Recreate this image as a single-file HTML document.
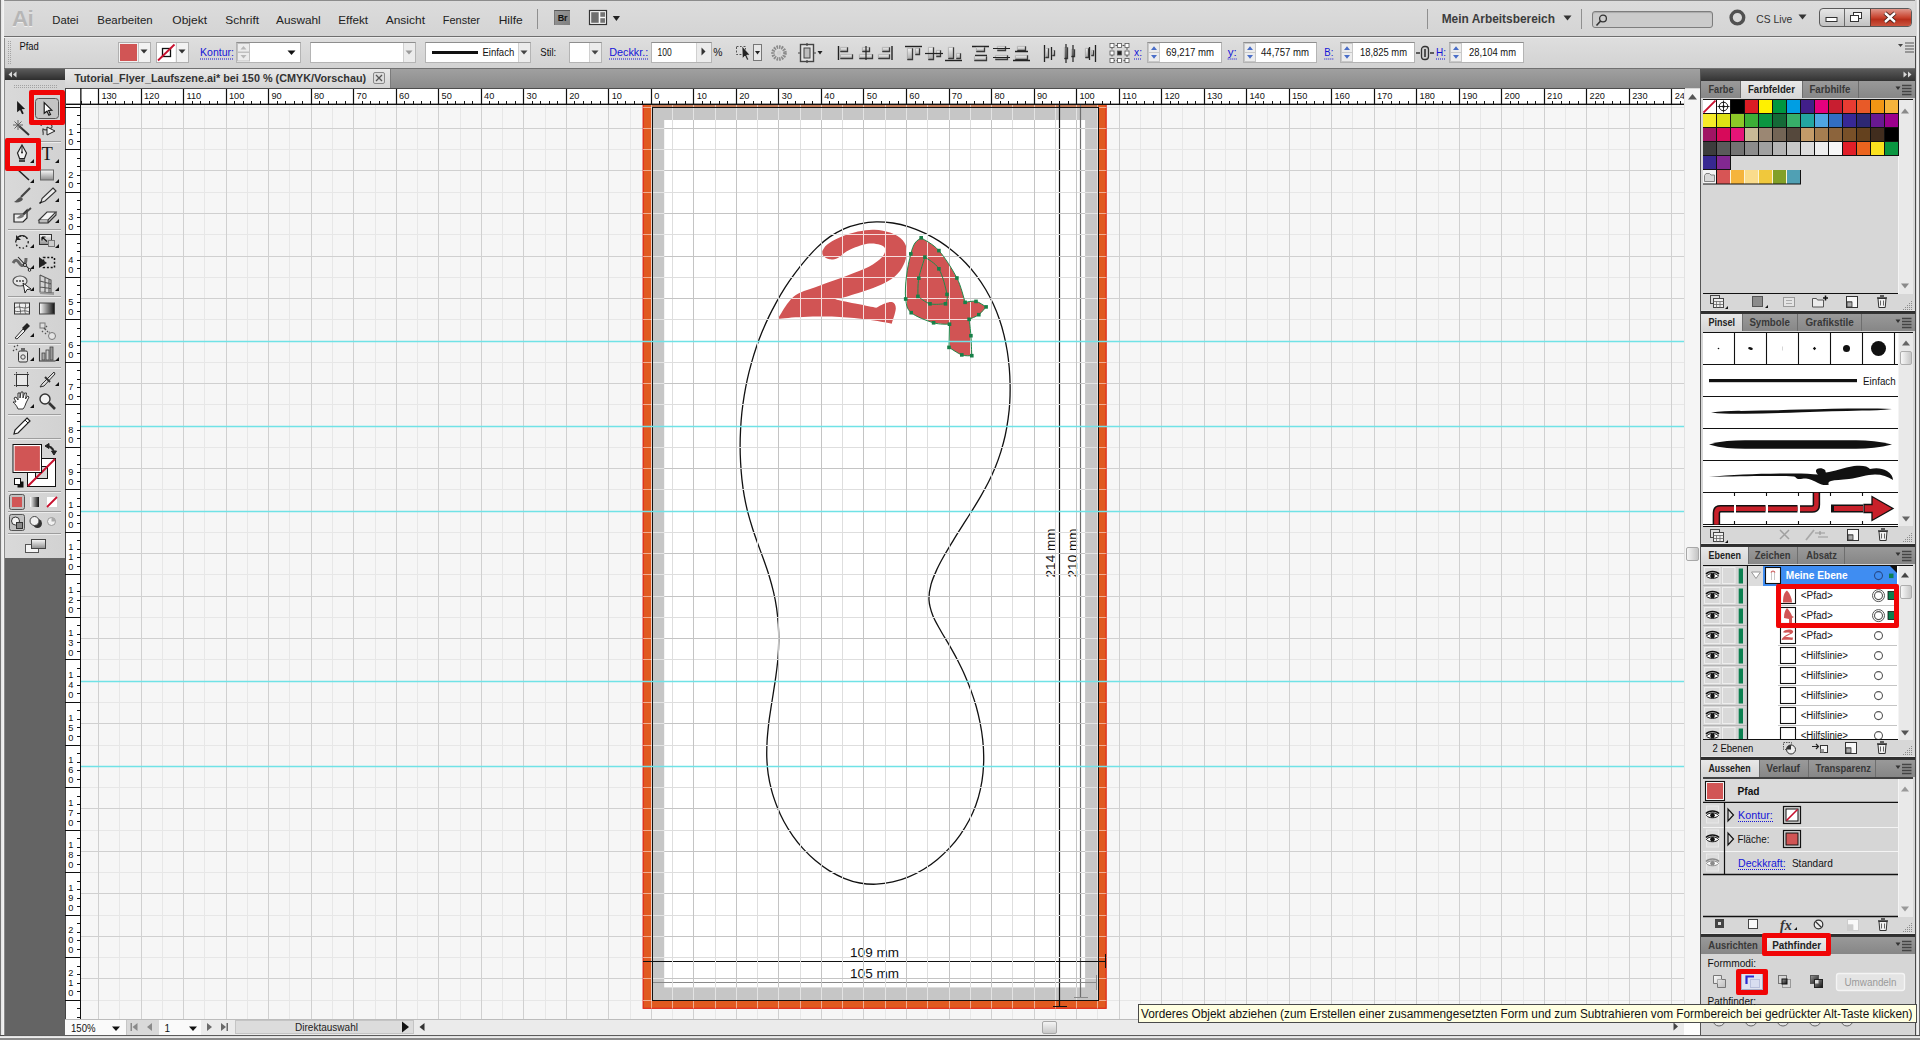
<!DOCTYPE html><html lang="de"><head><meta charset="utf-8"><title>Tutorial_Flyer_Laufszene.ai</title><style>
*{box-sizing:border-box}
html,body{margin:0;padding:0}
body{width:1920px;height:1040px;position:relative;overflow:hidden;background:#d6d6d6;font-family:"Liberation Sans",sans-serif;font-size:11px;color:#111;line-height:1}
.a{position:absolute}
.t{position:absolute;white-space:nowrap}
.menu{font-size:12.5px;color:#1a1a1a;top:13px;letter-spacing:-0.1px}
.lnk{color:#1414d8;border-bottom:1px dotted #1414d8;padding-bottom:1px}
.inp{position:absolute;background:#fff;border:1px solid #b4b4b4;border-top-color:#8e8e8e;height:21px;top:42px}
.tab{position:absolute;height:17px;font-weight:bold;font-size:11px;color:#3a3a3a;padding-top:3px;text-align:center;border-right:1px solid #6e6e6e;background:linear-gradient(#9a9a9a,#878787)}
.tab.on{background:linear-gradient(#e8e8e8,#d6d6d6);color:#222;border-right:none}
.tabbar{position:absolute;left:1701px;width:214px;height:17px;background:linear-gradient(#999,#868686)}
.sep{position:absolute;left:1701px;width:214px;height:4px;background:linear-gradient(#e4e4e4 0,#e4e4e4 1px,#2c2c2c 1px,#333 3.5px,#555 4px)}
.psb{position:absolute;left:1898px;width:15px;background:#e9e9e9;border-left:1px solid #f4f4f4}
.red{position:absolute;border:5px solid #f00506;border-radius:2px}
</style></head><body><svg class="a" style="left:81px;top:105px" width="1603" height="914" viewBox="0 0 1603 914"><defs><path id="gmn" d="M38.5 0V914M81.5 0V914M123.5 0V914M166.5 0V914M208.5 0V914M251.5 0V914M294.5 0V914M336.5 0V914M379.5 0V914M421.5 0V914M464.5 0V914M506.5 0V914M549.5 0V914M591.5 0V914M634.5 0V914M676.5 0V914M719.5 0V914M761.5 0V914M804.5 0V914M846.5 0V914M889.5 0V914M931.5 0V914M974.5 0V914M1016.5 0V914M1059.5 0V914M1101.5 0V914M1144.5 0V914M1186.5 0V914M1229.5 0V914M1271.5 0V914M1314.5 0V914M1357.5 0V914M1399.5 0V914M1442.5 0V914M1484.5 0V914M1527.5 0V914M1569.5 0V914M0 2.5H1603M0 44.5H1603M0 87.5H1603M0 129.5H1603M0 172.5H1603M0 214.5H1603M0 257.5H1603M0 299.5H1603M0 342.5H1603M0 384.5H1603M0 427.5H1603M0 469.5H1603M0 512.5H1603M0 554.5H1603M0 597.5H1603M0 640.5H1603M0 682.5H1603M0 725.5H1603M0 767.5H1603M0 810.5H1603M0 852.5H1603M0 895.5H1603"/><path id="gmj" d="M17.5 0V914M60.5 0V914M102.5 0V914M145.5 0V914M187.5 0V914M230.5 0V914M272.5 0V914M315.5 0V914M357.5 0V914M400.5 0V914M442.5 0V914M485.5 0V914M527.5 0V914M570.5 0V914M612.5 0V914M655.5 0V914M697.5 0V914M740.5 0V914M782.5 0V914M825.5 0V914M868.5 0V914M910.5 0V914M953.5 0V914M995.5 0V914M1038.5 0V914M1080.5 0V914M1123.5 0V914M1165.5 0V914M1208.5 0V914M1250.5 0V914M1293.5 0V914M1335.5 0V914M1378.5 0V914M1420.5 0V914M1463.5 0V914M1505.5 0V914M1548.5 0V914M1590.5 0V914M0 23.5H1603M0 65.5H1603M0 108.5H1603M0 151.5H1603M0 193.5H1603M0 236.5H1603M0 278.5H1603M0 321.5H1603M0 363.5H1603M0 406.5H1603M0 448.5H1603M0 491.5H1603M0 533.5H1603M0 576.5H1603M0 618.5H1603M0 661.5H1603M0 703.5H1603M0 746.5H1603M0 788.5H1603M0 831.5H1603M0 873.5H1603"/><clipPath id="cw"><rect x="583.2" y="15" width="420.9" height="867.4"/></clipPath><clipPath id="cb"><rect x="561.9" y="0" width="463.5" height="903.6"/></clipPath><clipPath id="cr"><path d="M741.3 146.1C742.1 145 743 142 745.9 139.7C748.8 137.4 753.4 134.6 758.6 132.4C763.8 130.2 771.1 127.9 776.9 126.6C782.7 125.3 787.9 124.5 793.4 124.7C798.9 124.9 805.1 126.1 809.8 127.8C814.5 129.6 819 132.1 821.7 135.2C824.4 138.2 825.8 142 825.9 146.1C826 150.2 824.7 155.5 822.6 159.8C820.5 164.1 818.1 168 813.5 171.7C808.9 175.4 802.8 178.6 795.2 181.8C787.6 185 774.6 188.8 767.8 190.9C760.9 193 756.4 193.9 754.1 194.5C757.9 195.3 770 197.7 776.9 199.1C783.8 200.5 792.2 202.2 795.2 202.8C796.7 202 801.6 199.1 804.3 198.2C807 197.3 809.9 196.4 811.6 197.3C813.4 198.2 814.9 200.1 814.8 203.7C814.6 207.3 811.4 216.2 810.7 218.7C806.6 218 794.8 215.7 786.1 214.6C777.4 213.5 769.3 212.3 758.6 211.9C747.9 211.4 732.4 211.6 722.1 211.9C711.8 212.2 701.1 213.4 696.9 213.7C698.7 211 703.9 201.6 707.5 197.3C711.1 193 712.9 191 718.4 188.1C723.9 185.2 732.2 182.9 740.4 179.9C748.6 176.9 759.9 172.9 767.8 169.9C775.7 166.9 782.4 164.6 787.9 161.7C793.4 158.8 798 155.4 800.7 152.5C803.4 149.6 804.6 146.4 804.3 144.3C804 142.2 801.9 140.6 798.9 139.7C795.9 138.8 791.3 137.9 786.1 138.8C780.9 139.7 772.7 142.8 767.8 145.2C762.9 147.5 760 151.4 756.8 152.9C753.6 154.4 751 154.7 748.6 154.3C746.2 153.9 743.4 152.1 742.2 150.7C741 149.3 741.4 146.9 741.3 146.1Z M840.2 132.8C843.2 134.9 852 138.9 857.9 145.6C863.8 152.3 871.5 164.4 875.9 173C880.3 181.6 882.7 193.2 884.1 197.3C885.9 197.2 891.5 195.6 895 196.4C898.5 197.2 903.4 201 905.1 201.9C903.9 203.2 900.6 207.6 897.8 209.7C895 211.8 889.7 213.5 888.1 214.3C888.4 217 889.5 224.6 889.9 230.7C890.3 236.8 890.6 247.4 890.8 250.7C889.1 250.6 884.6 251.3 880.8 249.9C877 248.5 870.1 243.6 868 242.4L868.5 219.2C865.9 219 859 219.7 852.6 217.8C846.2 215.9 834.9 211.7 830.2 207.7C825.6 203.7 825.5 200.1 824.7 194C823.9 187.9 824.6 178.5 825.5 171C826.4 163.5 828.4 154.4 829.8 148.9C831.2 143.4 832.3 140.7 834 138C835.7 135.3 839.2 133.7 840.2 132.8Z M843.9 152.1C846.2 154.1 854.2 157.6 857.9 163.8C861.6 170 864.9 183.6 866 189.4C867.1 195.2 864.8 197.2 864.5 198.8C861.9 198.8 853.6 200 849 198.8C844.4 197.6 838.9 192.6 836.9 191.4C837 188.4 836.6 179.7 837.8 173.2C839 166.7 842.9 155.6 843.9 152.1Z"/></clipPath></defs><rect width="1603" height="914" fill="#f6f6f6"/><g fill="none" stroke-width="1" shape-rendering="crispEdges"><use href="#gmn" stroke="#e7e7e7"/><use href="#gmj" stroke="#d0d0d0"/></g><rect x="561.9" y="-6.3" width="463.5" height="909.9" fill="#e05a20"/><rect x="562.2" y="-6.3" width="462.9" height="909.6" fill="none" stroke="#e02a1c" stroke-width="1.2"/><rect x="570.4" y="0" width="446.5" height="2.2" fill="#c07a58"/><rect x="570.4" y="2.2" width="446.5" height="892.9" fill="#c6c6c6"/><g clip-path="url(#cb)" fill="none" stroke-width="1" shape-rendering="crispEdges" stroke="#fff" stroke-opacity="0.5"><use href="#gmn"/><use href="#gmj"/></g><rect x="583.2" y="15" width="420.9" height="867.4" fill="#fff"/><path d="M741.3 146.1C742.1 145 743 142 745.9 139.7C748.8 137.4 753.4 134.6 758.6 132.4C763.8 130.2 771.1 127.9 776.9 126.6C782.7 125.3 787.9 124.5 793.4 124.7C798.9 124.9 805.1 126.1 809.8 127.8C814.5 129.6 819 132.1 821.7 135.2C824.4 138.2 825.8 142 825.9 146.1C826 150.2 824.7 155.5 822.6 159.8C820.5 164.1 818.1 168 813.5 171.7C808.9 175.4 802.8 178.6 795.2 181.8C787.6 185 774.6 188.8 767.8 190.9C760.9 193 756.4 193.9 754.1 194.5C757.9 195.3 770 197.7 776.9 199.1C783.8 200.5 792.2 202.2 795.2 202.8C796.7 202 801.6 199.1 804.3 198.2C807 197.3 809.9 196.4 811.6 197.3C813.4 198.2 814.9 200.1 814.8 203.7C814.6 207.3 811.4 216.2 810.7 218.7C806.6 218 794.8 215.7 786.1 214.6C777.4 213.5 769.3 212.3 758.6 211.9C747.9 211.4 732.4 211.6 722.1 211.9C711.8 212.2 701.1 213.4 696.9 213.7C698.7 211 703.9 201.6 707.5 197.3C711.1 193 712.9 191 718.4 188.1C723.9 185.2 732.2 182.9 740.4 179.9C748.6 176.9 759.9 172.9 767.8 169.9C775.7 166.9 782.4 164.6 787.9 161.7C793.4 158.8 798 155.4 800.7 152.5C803.4 149.6 804.6 146.4 804.3 144.3C804 142.2 801.9 140.6 798.9 139.7C795.9 138.8 791.3 137.9 786.1 138.8C780.9 139.7 772.7 142.8 767.8 145.2C762.9 147.5 760 151.4 756.8 152.9C753.6 154.4 751 154.7 748.6 154.3C746.2 153.9 743.4 152.1 742.2 150.7C741 149.3 741.4 146.9 741.3 146.1Z" fill="#d15454"/><path d="M840.2 132.8C843.2 134.9 852 138.9 857.9 145.6C863.8 152.3 871.5 164.4 875.9 173C880.3 181.6 882.7 193.2 884.1 197.3C885.9 197.2 891.5 195.6 895 196.4C898.5 197.2 903.4 201 905.1 201.9C903.9 203.2 900.6 207.6 897.8 209.7C895 211.8 889.7 213.5 888.1 214.3C888.4 217 889.5 224.6 889.9 230.7C890.3 236.8 890.6 247.4 890.8 250.7C889.1 250.6 884.6 251.3 880.8 249.9C877 248.5 870.1 243.6 868 242.4L868.5 219.2C865.9 219 859 219.7 852.6 217.8C846.2 215.9 834.9 211.7 830.2 207.7C825.6 203.7 825.5 200.1 824.7 194C823.9 187.9 824.6 178.5 825.5 171C826.4 163.5 828.4 154.4 829.8 148.9C831.2 143.4 832.3 140.7 834 138C835.7 135.3 839.2 133.7 840.2 132.8Z" fill="#d15454"/><path d="M795.2 116.9C800.7 116.8 806.3 117.2 811.8 118C817.3 118.8 822.7 120.1 828 121.8C833.3 123.5 838.6 125.7 843.7 128.1C848.8 130.5 853.8 133.3 858.6 136.4C863.4 139.5 867.9 142.9 872.3 146.5C876.6 150.1 880.8 153.9 884.7 158C888.6 162.1 892.3 166.4 895.6 170.8C898.9 175.2 901.9 179.8 904.7 184.5C907.5 189.2 910 194.1 912.3 199.1C914.6 204.1 916.6 209.1 918.4 214.3C920.2 219.5 921.7 224.8 923 230.2C924.3 235.6 925.4 241 926.3 246.5C927.2 252 927.8 257.6 928.3 263.2C928.8 268.8 929 274.5 929.1 280.1C929.2 285.7 929.1 291.4 928.8 297C928.5 302.6 927.9 308.3 927.1 313.9C926.3 319.5 925.4 325.1 924.2 330.5C923 335.9 921.5 341.3 919.9 346.6C918.2 351.9 916.4 357.2 914.3 362.3C912.2 367.4 909.9 372.4 907.4 377.3C904.9 382.2 902.2 387 899.4 391.8C896.6 396.6 893.7 401.3 890.8 406C887.9 410.7 884.8 415.4 881.8 420.1C878.8 424.8 875.8 429.5 872.9 434.3C870 439.1 867 443.9 864.2 448.8C861.4 453.7 858.6 458.7 856.2 463.8C853.9 468.9 851.5 474 850.1 479.2C848.7 484.4 847.7 489.7 848 495C848.3 500.3 849.9 505.6 851.9 510.8C853.9 516 857.2 521.2 860 526.2C862.8 531.2 865.9 536 868.7 540.9C871.5 545.8 874.1 550.4 876.6 555.3C879.1 560.2 881.6 565.2 883.8 570.2C886 575.2 888.1 580.4 890 585.6C891.9 590.8 893.7 596.1 895.2 601.5C896.7 606.9 898 612.4 899.1 617.9C900.2 623.4 901.1 629 901.7 634.6C902.3 640.2 902.7 645.8 902.7 651.3C902.8 656.8 902.5 662.4 902 667.9C901.5 673.4 900.6 678.9 899.4 684.3C898.2 689.7 896.7 695 894.8 700.2C892.9 705.4 890.6 710.6 888 715.5C885.4 720.4 882.4 725.2 879.2 729.8C876 734.4 872.4 738.8 868.6 742.9C864.8 747 860.7 750.8 856.4 754.4C852.1 758 847.5 761.3 842.7 764.2C837.9 767.1 832.9 769.7 827.7 771.8C822.6 773.9 817.2 775.7 811.8 776.9C806.4 778.1 800.8 779 795.3 779.2C789.8 779.4 784.3 779 778.9 778C773.5 777 768.2 775.4 763.1 773.3C758 771.2 752.9 768.5 748.1 765.6C743.3 762.7 738.7 759.2 734.4 755.6C730.1 752 726.1 748 722.3 743.9C718.5 739.8 715 735.4 711.8 730.8C708.6 726.2 705.5 721.4 702.9 716.5C700.2 711.6 697.9 706.5 695.9 701.3C693.9 696.1 692 690.8 690.6 685.4C689.2 680 688 674.6 687.2 669.1C686.4 663.6 686 658.1 685.8 652.6C685.6 647.1 685.8 641.5 686.1 636C686.4 630.5 687 624.9 687.6 619.4C688.2 613.9 689.2 608.2 690 602.7C690.8 597.2 691.8 591.7 692.6 586.1C693.5 580.5 694.4 575 695.1 569.4C695.8 563.8 696.6 558.3 697 552.8C697.4 547.2 697.7 541.6 697.7 536.1C697.8 530.6 697.6 525 697.3 519.5C696.9 514 696.4 508.6 695.6 503.1C694.8 497.7 693.8 492.2 692.5 486.8C691.2 481.4 689.7 476 688.1 470.7C686.5 465.4 684.6 460.1 682.7 454.8C680.8 449.5 678.8 444.3 676.9 439C675 433.7 673.1 428.4 671.4 423C669.7 417.6 668.1 412.3 666.7 406.9C665.3 401.5 664.2 396.1 663.2 390.6C662.2 385.1 661.5 379.6 660.9 374.1C660.3 368.6 659.9 363.1 659.6 357.5C659.3 351.9 659.1 346.3 659.1 340.7C659.1 335.1 659.3 329.6 659.6 324C659.9 318.4 660.3 312.9 660.9 307.3C661.5 301.8 662.3 296.2 663.2 290.7C664.1 285.2 665.1 279.7 666.3 274.3C667.5 268.9 668.9 263.5 670.4 258.1C671.9 252.8 673.5 247.4 675.3 242.2C677.1 236.9 679.1 231.7 681.2 226.6C683.3 221.5 685.6 216.4 688 211.4C690.4 206.4 693 201.5 695.7 196.6C698.4 191.7 701.3 186.9 704.3 182.2C707.3 177.5 710.5 172.9 713.9 168.4C717.2 163.9 720.7 159.4 724.4 155.1C728.1 150.8 731.8 146.5 735.9 142.6C740 138.7 744.2 135 748.7 131.9C753.2 128.8 758 126 763 123.8C768 121.6 773.4 120 778.8 118.8C784.2 117.7 789.7 117 795.2 116.9Z" fill="none" stroke="#111" stroke-width="1.3"/><path d="M978.5 0V902" stroke="#111" stroke-width="1.2"/><path d="M972 901.5H986" stroke="#111" stroke-width="1"/><path d="M999.5 0V893" stroke="#6e6e6e" stroke-width="1.2"/><path d="M993 892.5H1007" stroke="#8a8a8a" stroke-width="1"/><path d="M562 856.5H1024.5" stroke="#111" stroke-width="1"/><path d="M1024.5 849V863" stroke="#111" stroke-width="1"/><path d="M571 877.5H1016" stroke="#8a8a8a" stroke-width="1"/><path d="M1015.5 870V885" stroke="#8a8a8a" stroke-width="1"/><text x="793.5" y="852" text-anchor="middle" font-family="Liberation Sans, sans-serif" font-size="13.5" fill="#111">109 mm</text><text x="793.5" y="873" text-anchor="middle" font-family="Liberation Sans, sans-serif" font-size="13.5" fill="#111">105 mm</text><text transform="translate(974 448) rotate(-90)" text-anchor="middle" font-family="Liberation Sans, sans-serif" font-size="13.5" fill="#111">214 mm</text><text transform="translate(995.5 448) rotate(-90)" text-anchor="middle" font-family="Liberation Sans, sans-serif" font-size="13.5" fill="#111">210 mm</text><g clip-path="url(#cw)" fill="none" stroke-width="1" shape-rendering="crispEdges"><use href="#gmn" stroke="#dedede"/><use href="#gmj" stroke="#c4c4c4"/></g><g clip-path="url(#cr)" fill="none" stroke-width="1" shape-rendering="crispEdges" stroke="#f6dcdc"><use href="#gmn"/><use href="#gmj"/></g><path d="M840.2 132.8C843.2 134.9 852 138.9 857.9 145.6C863.8 152.3 871.5 164.4 875.9 173C880.3 181.6 882.7 193.2 884.1 197.3C885.9 197.2 891.5 195.6 895 196.4C898.5 197.2 903.4 201 905.1 201.9C903.9 203.2 900.6 207.6 897.8 209.7C895 211.8 889.7 213.5 888.1 214.3C888.4 217 889.5 224.6 889.9 230.7C890.3 236.8 890.6 247.4 890.8 250.7C889.1 250.6 884.6 251.3 880.8 249.9C877 248.5 870.1 243.6 868 242.4L868.5 219.2C865.9 219 859 219.7 852.6 217.8C846.2 215.9 834.9 211.7 830.2 207.7C825.6 203.7 825.5 200.1 824.7 194C823.9 187.9 824.6 178.5 825.5 171C826.4 163.5 828.4 154.4 829.8 148.9C831.2 143.4 832.3 140.7 834 138C835.7 135.3 839.2 133.7 840.2 132.8Z" fill="none" stroke="#1f8a4c" stroke-width="1"/><path d="M843.9 152.1C846.2 154.1 854.2 157.6 857.9 163.8C861.6 170 864.9 183.6 866 189.4C867.1 195.2 864.8 197.2 864.5 198.8C861.9 198.8 853.6 200 849 198.8C844.4 197.6 838.9 192.6 836.9 191.4C837 188.4 836.6 179.7 837.8 173.2C839 166.7 842.9 155.6 843.9 152.1Z" fill="none" stroke="#1f8a4c" stroke-width="1"/><rect x="571.5" y="2.5" width="446" height="893" fill="none" stroke="#111" stroke-width="1.1" shape-rendering="crispEdges"/><path d="M0 236.5H1603M0 321.5H1603M0 406.5H1603M0 576.5H1603M0 661.5H1603" stroke="#70e2e6" stroke-width="1.7" fill="none"/><g fill="#178048"><rect x="838.4" y="131" width="3.6" height="3.6"/><rect x="856.1" y="143.8" width="3.6" height="3.6"/><rect x="874.1" y="171.2" width="3.6" height="3.6"/><rect x="882.3" y="195.5" width="3.6" height="3.6"/><rect x="893.2" y="194.6" width="3.6" height="3.6"/><rect x="903.3" y="200.1" width="3.6" height="3.6"/><rect x="896" y="207.9" width="3.6" height="3.6"/><rect x="886.3" y="212.5" width="3.6" height="3.6"/><rect x="888.1" y="228.9" width="3.6" height="3.6"/><rect x="889" y="248.9" width="3.6" height="3.6"/><rect x="879" y="248.1" width="3.6" height="3.6"/><rect x="866.2" y="240.6" width="3.6" height="3.6"/><rect x="866.7" y="217.4" width="3.6" height="3.6"/><rect x="850.8" y="216" width="3.6" height="3.6"/><rect x="828.4" y="205.9" width="3.6" height="3.6"/><rect x="822.9" y="192.2" width="3.6" height="3.6"/><rect x="828" y="147.1" width="3.6" height="3.6"/><rect x="842.1" y="150.3" width="3.6" height="3.6"/><rect x="856.1" y="162" width="3.6" height="3.6"/><rect x="864.2" y="187.6" width="3.6" height="3.6"/><rect x="862.7" y="197" width="3.6" height="3.6"/><rect x="847.2" y="197" width="3.6" height="3.6"/><rect x="835.1" y="189.6" width="3.6" height="3.6"/><rect x="836" y="171.4" width="3.6" height="3.6"/></g></svg><div class="a" style="left:0;top:0;width:1920px;height:1px;background:#8c8c8c"></div><div class="a" style="left:0;top:0;width:5px;height:1040px;background:linear-gradient(90deg,#777 0,#777 0.8px,#e2e2e2 0.8px,#f4f4f4 3.6px,#9a9a9a 3.6px,#9a9a9a 5px)"></div><div class="a" style="left:1915px;top:0;width:5px;height:1040px;background:linear-gradient(90deg,#d4d4d4 0,#d4d4d4 1px,#cfcfcf 1px,#fafafa 3px,#e0e0e0 4px,#6a6a6a 4px,#6a6a6a 5px)"></div><div class="a" style="left:1915px;top:36px;width:1px;height:1000px;background:#4a4a4a"></div><div class="a" style="left:0;top:1035px;width:1920px;height:5px;background:linear-gradient(#4a4a4a 0,#4a4a4a 1px,#dcdcdc 1px,#f6f6f6 3.5px,#8a8a8a 3.5px,#8a8a8a 5px)"></div><div class="a" style="left:4px;top:1px;width:1911px;height:35px;background:linear-gradient(#dcdcdc,#d4d4d4)"></div><div class="t" style="left:12px;top:8px;font-size:22.5px;font-weight:bold;color:#b6b6b6;letter-spacing:-0.8px;text-shadow:0 1px 0 #eee">Ai</div><div class="a" style="left:537px;top:9px;width:1px;height:20px;background:#8f8f8f"></div><div class="a" style="left:554px;top:10px;width:16px;height:15px;background:linear-gradient(135deg,#9a9a9a,#7e7e7e);border-top:1px solid #555;border-left:1px solid #777;color:#111;font-size:9px;font-weight:bold;text-align:center;padding-top:3px;letter-spacing:-0.3px">Br</div><svg class="a" style="left:588px;top:9px" width="34" height="18"><rect x="1.5" y="1.5" width="17" height="14" fill="#fafafa" stroke="#333" stroke-width="1.2"/><rect x="3.2" y="3.2" width="7.5" height="10.6" fill="#6e6e6e"/><rect x="12.3" y="3.2" width="4.7" height="4.6" fill="#747474"/><rect x="12.3" y="9.2" width="4.7" height="4.6" fill="#747474"/><path d="M24.8 7h7.2l-3.6 5z" fill="#222"/></svg><div class="a" style="left:1427px;top:9px;width:1px;height:20px;background:#8f8f8f"></div><svg class="a" style="left:1563px;top:15px" width="10" height="8"><path d="M0.5 0.5h8l-4 5z" fill="#333"/></svg><div class="a" style="left:1581px;top:9px;width:1px;height:20px;background:#8f8f8f"></div><div class="a" style="left:1592px;top:11px;width:121px;height:17px;background:#cbcbcb;border:1px solid #7d7d7d;border-radius:3px;box-shadow:inset 0 1px 1px #aaa"></div><svg class="a" style="left:1595px;top:13px" width="14" height="14"><circle cx="8" cy="5.5" r="3.4" fill="none" stroke="#333" stroke-width="1.3"/><path d="M5.6 8L1.5 12.5" stroke="#333" stroke-width="1.6"/></svg><svg class="a" style="left:1728px;top:9px" width="18" height="18"><circle cx="9.4" cy="8.6" r="6.3" fill="none" stroke="#505050" stroke-width="3.4"/></svg><svg class="a" style="left:1798px;top:14px" width="10" height="8"><path d="M0.5 0.5h8l-4 5z" fill="#333"/></svg><div class="a" style="left:1819px;top:8px;width:93px;height:19px;border:1px solid #5a5a5a;border-radius:4px;background:linear-gradient(#e6e6e6,#c2c2c2);overflow:hidden"><div class="a" style="left:24px;top:0;width:1px;height:19px;background:#6a6a6a"></div><div class="a" style="left:50px;top:0;width:42px;height:19px;background:linear-gradient(#e0968a,#c8432e 45%,#b8301c 55%,#d0604a);border-left:1px solid #6a3a30"></div></div><svg class="a" style="left:1819px;top:8px" width="93" height="19"><rect x="7" y="9.5" width="11" height="4" fill="#fff" stroke="#333" stroke-width="1"/><rect x="34.5" y="4.5" width="8" height="6" fill="#fff" stroke="#333"/><rect x="31.5" y="7.5" width="8" height="6" fill="#fff" stroke="#333"/><path d="M66 5l10 9M76 5l-10 9" stroke="#3a1a14" stroke-width="4.2"/><path d="M66 5l10 9M76 5l-10 9" stroke="#fff" stroke-width="2.4"/></svg><div class="a" style="left:4px;top:36px;width:1911px;height:1px;background:#6e6e6e"></div><div class="a" style="left:4px;top:37px;width:1911px;height:1px;background:#ededed"></div><div class="a" style="left:4px;top:38px;width:1911px;height:31px;background:linear-gradient(#dedede,#d2d2d2);border-left:1px solid #8c8c8c"></div><svg class="a" style="left:8px;top:41px" width="4" height="23"><path d="M0.5 0v23M2.5 0v23" stroke="#a4a4a4" stroke-width="1" stroke-dasharray="1 1"/></svg><div class="a" style="left:118px;top:42px;width:33px;height:21px;background:#f2f2f2;border:1px solid #b0b0b0"><div class="a" style="left:1px;top:1px;width:17px;height:17px;background:#d15555"></div><div class="a" style="left:19px;top:0;width:1px;height:19px;background:#c4c4c4"></div></div><svg class="a" style="left:140px;top:49px" width="9" height="6"><path d="M0.5 0.5h7l-3.5 4z" fill="#333"/></svg><div class="a" style="left:156px;top:42px;width:33px;height:21px;background:#f2f2f2;border:1px solid #b0b0b0"><div class="a" style="left:19px;top:0;width:1px;height:19px;background:#c4c4c4"></div></div><svg class="a" style="left:157px;top:43px" width="19" height="19"><rect x="0" y="0" width="18" height="19" fill="#fff"/><rect x="5.5" y="5.5" width="8" height="8" fill="none" stroke="#111" stroke-width="1.3"/><path d="M1 17.5L17.5 1.5" stroke="#c8102e" stroke-width="1.8"/></svg><svg class="a" style="left:178px;top:49px" width="9" height="6"><path d="M0.5 0.5h7l-3.5 4z" fill="#333"/></svg><div class="inp" style="left:236px;width:65px"></div><svg class="a" style="left:237px;top:43px" width="14" height="19"><rect x="0.5" y="0.5" width="12" height="8.5" fill="#ececec" stroke="#c0c0c0"/><rect x="0.5" y="9.5" width="12" height="8.5" fill="#ececec" stroke="#c0c0c0"/><path d="M3.5 6.5h6l-3-3.5zM3.5 12h6l-3 3.5z" fill="#b8b8b8"/></svg><svg class="a" style="left:287px;top:50px" width="10" height="6"><path d="M0.5 0.5h8l-4 4.5z" fill="#111"/></svg><div class="inp" style="left:310px;width:106px"><div class="a" style="right:0;top:0;width:12px;height:19px;background:#ececec;border-left:1px solid #d0d0d0"></div></div><svg class="a" style="left:405px;top:50px" width="9" height="6"><path d="M0.5 0.5h7l-3.5 4z" fill="#9a9a9a"/></svg><div class="inp" style="left:425px;width:106px"><div class="a" style="left:6px;top:8px;width:46px;height:3px;background:#111"></div><div class="a" style="right:0;top:0;width:12px;height:19px;background:#ececec;border-left:1px solid #d0d0d0"></div></div><svg class="a" style="left:520px;top:50px" width="9" height="6"><path d="M0.5 0.5h7l-3.5 4z" fill="#444"/></svg><div class="inp" style="left:569px;width:33px"><div class="a" style="right:0;top:0;width:12px;height:19px;background:#ececec;border-left:1px solid #d0d0d0"></div></div><svg class="a" style="left:591px;top:50px" width="9" height="6"><path d="M0.5 0.5h7l-3.5 4z" fill="#444"/></svg><div class="inp" style="left:651px;width:61px"><div class="a" style="right:0;top:0;width:15px;height:19px;background:#ececec;border-left:1px solid #d0d0d0"></div></div><svg class="a" style="left:700px;top:47px" width="8" height="10"><path d="M1.5 0.5v8l4-4z" fill="#333"/></svg><svg class="a" style="left:65px;top:88px" width="1620" height="17" viewBox="0 0 1620 17"><rect width="1620" height="17" fill="#fff"/><rect y="0" width="1620" height="1" fill="#4c4c4c"/><rect y="15.6" width="1620" height="1.4" fill="#111"/><rect x="15.2" y="0" width="1.3" height="17" fill="#111"/><rect x="0" y="0" width="1" height="17" fill="#444"/><path d="M33.5 1V16M76.5 1V16M118.5 1V16M161.5 1V16M203.5 1V16M246.5 1V16M288.5 1V16M331.5 1V16M373.5 1V16M416.5 1V16M458.5 1V16M501.5 1V16M543.5 1V16M586.5 1V16M628.5 1V16M671.5 1V16M713.5 1V16M756.5 1V16M798.5 1V16M841.5 1V16M884.5 1V16M926.5 1V16M969.5 1V16M1011.5 1V16M1054.5 1V16M1096.5 1V16M1139.5 1V16M1181.5 1V16M1224.5 1V16M1266.5 1V16M1309.5 1V16M1351.5 1V16M1394.5 1V16M1436.5 1V16M1479.5 1V16M1521.5 1V16M1564.5 1V16M1606.5 1V16" stroke="#111" stroke-width="1.2" fill="none"/><path d="M16.5 13V16M25.5 13V16M42.5 13V16M50.5 13V16M59.5 13V16M67.5 13V16M84.5 13V16M93.5 13V16M101.5 13V16M110.5 13V16M127.5 13V16M135.5 13V16M144.5 13V16M152.5 13V16M169.5 13V16M178.5 13V16M186.5 13V16M195.5 13V16M212.5 13V16M220.5 13V16M229.5 13V16M237.5 13V16M254.5 13V16M263.5 13V16M271.5 13V16M280.5 13V16M297.5 13V16M305.5 13V16M314.5 13V16M322.5 13V16M339.5 13V16M348.5 13V16M356.5 13V16M365.5 13V16M382.5 13V16M390.5 13V16M399.5 13V16M407.5 13V16M424.5 13V16M433.5 13V16M441.5 13V16M450.5 13V16M467.5 13V16M475.5 13V16M484.5 13V16M492.5 13V16M509.5 13V16M518.5 13V16M526.5 13V16M535.5 13V16M552.5 13V16M560.5 13V16M569.5 13V16M577.5 13V16M594.5 13V16M603.5 13V16M611.5 13V16M620.5 13V16M637.5 13V16M645.5 13V16M654.5 13V16M662.5 13V16M679.5 13V16M688.5 13V16M696.5 13V16M705.5 13V16M722.5 13V16M730.5 13V16M739.5 13V16M747.5 13V16M764.5 13V16M773.5 13V16M781.5 13V16M790.5 13V16M807.5 13V16M816.5 13V16M824.5 13V16M833.5 13V16M850.5 13V16M858.5 13V16M867.5 13V16M875.5 13V16M892.5 13V16M901.5 13V16M909.5 13V16M918.5 13V16M935.5 13V16M943.5 13V16M952.5 13V16M960.5 13V16M977.5 13V16M986.5 13V16M994.5 13V16M1003.5 13V16M1020.5 13V16M1028.5 13V16M1037.5 13V16M1045.5 13V16M1062.5 13V16M1071.5 13V16M1079.5 13V16M1088.5 13V16M1105.5 13V16M1113.5 13V16M1122.5 13V16M1130.5 13V16M1147.5 13V16M1156.5 13V16M1164.5 13V16M1173.5 13V16M1190.5 13V16M1198.5 13V16M1207.5 13V16M1215.5 13V16M1232.5 13V16M1241.5 13V16M1249.5 13V16M1258.5 13V16M1275.5 13V16M1283.5 13V16M1292.5 13V16M1300.5 13V16M1317.5 13V16M1326.5 13V16M1334.5 13V16M1343.5 13V16M1360.5 13V16M1368.5 13V16M1377.5 13V16M1385.5 13V16M1402.5 13V16M1411.5 13V16M1419.5 13V16M1428.5 13V16M1445.5 13V16M1453.5 13V16M1462.5 13V16M1470.5 13V16M1487.5 13V16M1496.5 13V16M1504.5 13V16M1513.5 13V16M1530.5 13V16M1538.5 13V16M1547.5 13V16M1555.5 13V16M1572.5 13V16M1581.5 13V16M1589.5 13V16M1598.5 13V16M1615.5 13V16" stroke="#111" stroke-width="1" fill="none"/><g font-family="Liberation Sans, sans-serif" font-size="9.2" fill="#111"><text x="36.4" y="10.8">130</text><text x="79" y="10.8">120</text><text x="121.5" y="10.8">110</text><text x="164" y="10.8">100</text><text x="206.5" y="10.8">90</text><text x="249" y="10.8">80</text><text x="291.6" y="10.8">70</text><text x="334.1" y="10.8">60</text><text x="376.6" y="10.8">50</text><text x="419.1" y="10.8">40</text><text x="461.6" y="10.8">30</text><text x="504.2" y="10.8">20</text><text x="546.7" y="10.8">10</text><text x="589.2" y="10.8">0</text><text x="631.7" y="10.8">10</text><text x="674.2" y="10.8">20</text><text x="716.8" y="10.8">30</text><text x="759.3" y="10.8">40</text><text x="801.8" y="10.8">50</text><text x="844.3" y="10.8">60</text><text x="886.8" y="10.8">70</text><text x="929.4" y="10.8">80</text><text x="971.9" y="10.8">90</text><text x="1014.4" y="10.8">100</text><text x="1056.9" y="10.8">110</text><text x="1099.4" y="10.8">120</text><text x="1142" y="10.8">130</text><text x="1184.5" y="10.8">140</text><text x="1227" y="10.8">150</text><text x="1269.5" y="10.8">160</text><text x="1312" y="10.8">170</text><text x="1354.6" y="10.8">180</text><text x="1397.1" y="10.8">190</text><text x="1439.6" y="10.8">200</text><text x="1482.1" y="10.8">210</text><text x="1524.6" y="10.8">220</text><text x="1567.2" y="10.8">230</text><text x="1609.7" y="10.8">240</text></g></svg><svg class="a" style="left:65px;top:105px" width="16" height="914" viewBox="0 0 16 914"><rect width="16" height="914" fill="#fff"/><rect x="15" width="1.3" height="914" fill="#111"/><rect x="0" width="1" height="914" fill="#444"/><path d="M0 2.5H16M0 44.5H16M0 87.5H16M0 129.5H16M0 172.5H16M0 214.5H16M0 257.5H16M0 299.5H16M0 342.5H16M0 384.5H16M0 427.5H16M0 469.5H16M0 512.5H16M0 554.5H16M0 597.5H16M0 640.5H16M0 682.5H16M0 725.5H16M0 767.5H16M0 810.5H16M0 852.5H16M0 895.5H16" stroke="#111" stroke-width="1.2" fill="none"/><path d="M12 10.5H16M12 19.5H16M12 27.5H16M12 36.5H16M12 53.5H16M12 61.5H16M12 70.5H16M12 78.5H16M12 95.5H16M12 104.5H16M12 112.5H16M12 121.5H16M12 138.5H16M12 146.5H16M12 155.5H16M12 163.5H16M12 180.5H16M12 189.5H16M12 197.5H16M12 206.5H16M12 223.5H16M12 231.5H16M12 240.5H16M12 248.5H16M12 265.5H16M12 274.5H16M12 282.5H16M12 291.5H16M12 308.5H16M12 316.5H16M12 325.5H16M12 333.5H16M12 350.5H16M12 359.5H16M12 367.5H16M12 376.5H16M12 393.5H16M12 401.5H16M12 410.5H16M12 418.5H16M12 435.5H16M12 444.5H16M12 452.5H16M12 461.5H16M12 478.5H16M12 486.5H16M12 495.5H16M12 503.5H16M12 520.5H16M12 529.5H16M12 537.5H16M12 546.5H16M12 563.5H16M12 571.5H16M12 580.5H16M12 588.5H16M12 605.5H16M12 614.5H16M12 622.5H16M12 631.5H16M12 648.5H16M12 657.5H16M12 665.5H16M12 674.5H16M12 691.5H16M12 699.5H16M12 708.5H16M12 716.5H16M12 733.5H16M12 742.5H16M12 750.5H16M12 759.5H16M12 776.5H16M12 784.5H16M12 793.5H16M12 801.5H16M12 818.5H16M12 827.5H16M12 835.5H16M12 844.5H16M12 861.5H16M12 869.5H16M12 878.5H16M12 886.5H16M12 903.5H16M12 912.5H16" stroke="#111" stroke-width="1" fill="none"/><g font-family="Liberation Sans, sans-serif" font-size="9.2" fill="#111"><text x="3.2" y="30.2">1</text><text x="3.2" y="40.2">0</text><text x="3.2" y="72.7">2</text><text x="3.2" y="82.7">0</text><text x="3.2" y="115.3">3</text><text x="3.2" y="125.3">0</text><text x="3.2" y="157.8">4</text><text x="3.2" y="167.8">0</text><text x="3.2" y="200.3">5</text><text x="3.2" y="210.3">0</text><text x="3.2" y="242.8">6</text><text x="3.2" y="252.8">0</text><text x="3.2" y="285.3">7</text><text x="3.2" y="295.3">0</text><text x="3.2" y="327.9">8</text><text x="3.2" y="337.9">0</text><text x="3.2" y="370.4">9</text><text x="3.2" y="380.4">0</text><text x="3.2" y="402.9">1</text><text x="3.2" y="412.9">0</text><text x="3.2" y="422.9">0</text><text x="3.2" y="445.4">1</text><text x="3.2" y="455.4">1</text><text x="3.2" y="465.4">0</text><text x="3.2" y="487.9">1</text><text x="3.2" y="497.9">2</text><text x="3.2" y="507.9">0</text><text x="3.2" y="530.5">1</text><text x="3.2" y="540.5">3</text><text x="3.2" y="550.5">0</text><text x="3.2" y="573">1</text><text x="3.2" y="583">4</text><text x="3.2" y="593">0</text><text x="3.2" y="615.5">1</text><text x="3.2" y="625.5">5</text><text x="3.2" y="635.5">0</text><text x="3.2" y="658">1</text><text x="3.2" y="668">6</text><text x="3.2" y="678">0</text><text x="3.2" y="700.5">1</text><text x="3.2" y="710.5">7</text><text x="3.2" y="720.5">0</text><text x="3.2" y="743.1">1</text><text x="3.2" y="753.1">8</text><text x="3.2" y="763.1">0</text><text x="3.2" y="785.6">1</text><text x="3.2" y="795.6">9</text><text x="3.2" y="805.6">0</text><text x="3.2" y="828.1">2</text><text x="3.2" y="838.1">0</text><text x="3.2" y="848.1">0</text><text x="3.2" y="870.6">2</text><text x="3.2" y="880.6">1</text><text x="3.2" y="890.6">0</text></g></svg><svg class="a" style="left:730px;top:38px" width="410" height="30" viewBox="730 38 410 30"><defs><linearGradient id="gb" x1="0" y1="0" x2="0" y2="1"><stop offset="0" stop-color="#f6f6f6"/><stop offset="1" stop-color="#a2a2a2"/></linearGradient></defs><rect x="736.5" y="46.5" width="9" height="8" fill="none" stroke="#555" stroke-dasharray="2 1.5"/><path d="M742 46l8 9-3.3.2 2 4.3-1.7.8-2-4.3-2.6 2.4z" fill="#222" stroke="#f0f0f0" stroke-width=".6"/><rect x="753.5" y="44.5" width="8" height="16" fill="#e8e8e8" stroke="#777"/><path d="M755 51h5l-2.5 3.5z" fill="#222"/><circle cx="779" cy="53" r="6" fill="none" stroke="#8a8a8a" stroke-width="3.5" stroke-dasharray="1.6 0.9"/><circle cx="779" cy="53" r="2.2" fill="#cfcfcf"/><rect x="800.5" y="44.5" width="13" height="17" fill="#e4e4e4" stroke="#444" stroke-width="1.4"/><rect x="804" y="48" width="6" height="10" fill="#bdbdbd" stroke="#444"/><path d="M807 43v3M807 60v3M798 53h3M813 53h3" stroke="#444" stroke-width="1.2"/><path d="M817.5 51h5l-2.5 3.5z" fill="#222"/><path d="M838.5 46v14" stroke="#222" stroke-width="1.4"/><rect x="840" y="47" width="8" height="5" fill="url(#gb)"/><path d="M840.3 51.5H847.5V47.3" fill="none" stroke="#3a3a3a" stroke-width="1.3"/><path d="M840.4 51V47.4H847" fill="none" stroke="#a8a8a8" stroke-width=".800"/><rect x="840" y="54" width="13" height="5" fill="url(#gb)"/><path d="M840.3 58.5H852.5V54.3" fill="none" stroke="#3a3a3a" stroke-width="1.3"/><path d="M840.4 58V54.4H852" fill="none" stroke="#a8a8a8" stroke-width=".800"/><rect x="862" y="47" width="8" height="5" fill="url(#gb)"/><path d="M862.3 51.5H869.5V47.3" fill="none" stroke="#3a3a3a" stroke-width="1.3"/><path d="M862.4 51V47.4H869" fill="none" stroke="#a8a8a8" stroke-width=".800"/><rect x="859" y="54" width="14" height="5" fill="url(#gb)"/><path d="M859.3 58.5H872.5V54.3" fill="none" stroke="#3a3a3a" stroke-width="1.3"/><path d="M859.4 58V54.4H872" fill="none" stroke="#a8a8a8" stroke-width=".800"/><path d="M866 46v14" stroke="#222" stroke-width="1.2"/><path d="M892 46v14" stroke="#222" stroke-width="1.4"/><rect x="882" y="47" width="8" height="5" fill="url(#gb)"/><path d="M882.3 51.5H889.5V47.3" fill="none" stroke="#3a3a3a" stroke-width="1.3"/><path d="M882.4 51V47.4H889" fill="none" stroke="#a8a8a8" stroke-width=".800"/><rect x="878" y="54" width="12" height="5" fill="url(#gb)"/><path d="M878.3 58.5H889.5V54.3" fill="none" stroke="#3a3a3a" stroke-width="1.3"/><path d="M878.4 58V54.4H889" fill="none" stroke="#a8a8a8" stroke-width=".800"/><path d="M905 46.5h17" stroke="#222" stroke-width="1.4"/><rect x="907" y="48" width="6" height="12" fill="url(#gb)"/><path d="M907.3 59.5H912.5V48.3" fill="none" stroke="#3a3a3a" stroke-width="1.3"/><path d="M907.4 59V48.4H912" fill="none" stroke="#a8a8a8" stroke-width=".800"/><rect x="915" y="48" width="5" height="7" fill="url(#gb)"/><path d="M915.3 54.5H919.5V48.3" fill="none" stroke="#3a3a3a" stroke-width="1.3"/><path d="M915.4 54V48.4H919" fill="none" stroke="#a8a8a8" stroke-width=".800"/><rect x="928" y="47" width="6" height="13" fill="url(#gb)"/><path d="M928.3 59.5H933.5V47.3" fill="none" stroke="#3a3a3a" stroke-width="1.3"/><path d="M928.4 59V47.4H933" fill="none" stroke="#a8a8a8" stroke-width=".800"/><rect x="936" y="50" width="5" height="7" fill="url(#gb)"/><path d="M936.3 56.5H940.5V50.3" fill="none" stroke="#3a3a3a" stroke-width="1.3"/><path d="M936.4 56V50.4H940" fill="none" stroke="#a8a8a8" stroke-width=".800"/><path d="M925 53.5h18" stroke="#222" stroke-width="1.2"/><path d="M945 60.5h17" stroke="#222" stroke-width="1.4"/><rect x="948" y="47" width="6" height="12" fill="url(#gb)"/><path d="M948.3 58.5H953.5V47.3" fill="none" stroke="#3a3a3a" stroke-width="1.3"/><path d="M948.4 58V47.4H953" fill="none" stroke="#a8a8a8" stroke-width=".800"/><rect x="956" y="53" width="5" height="6" fill="url(#gb)"/><path d="M956.3 58.5H960.5V53.3" fill="none" stroke="#3a3a3a" stroke-width="1.3"/><path d="M956.4 58V53.4H960" fill="none" stroke="#a8a8a8" stroke-width=".800"/><path d="M972 46.5h17M975 55.5h12" stroke="#222" stroke-width="1.3"/><rect x="976" y="47" width="9" height="5" fill="url(#gb)"/><path d="M976.3 51.5H984.5V47.3" fill="none" stroke="#3a3a3a" stroke-width="1.3"/><path d="M976.4 51V47.4H984" fill="none" stroke="#a8a8a8" stroke-width=".800"/><rect x="974" y="56" width="13" height="5" fill="url(#gb)"/><path d="M974.3 60.5H986.5V56.3" fill="none" stroke="#3a3a3a" stroke-width="1.3"/><path d="M974.4 60V56.4H986" fill="none" stroke="#a8a8a8" stroke-width=".800"/><rect x="997" y="46" width="9" height="5" fill="url(#gb)"/><path d="M997.3 50.5H1005.5V46.3" fill="none" stroke="#3a3a3a" stroke-width="1.3"/><path d="M997.4 50V46.4H1005" fill="none" stroke="#a8a8a8" stroke-width=".800"/><rect x="995" y="55" width="13" height="5" fill="url(#gb)"/><path d="M995.3 59.5H1007.5V55.3" fill="none" stroke="#3a3a3a" stroke-width="1.3"/><path d="M995.4 59V55.4H1007" fill="none" stroke="#a8a8a8" stroke-width=".800"/><path d="M993 48.5h17M993 57.5h17" stroke="#222" stroke-width="1.2"/><rect x="1017" y="46" width="9" height="5" fill="url(#gb)"/><path d="M1017.3 50.5H1025.5V46.3" fill="none" stroke="#3a3a3a" stroke-width="1.3"/><path d="M1017.4 50V46.4H1025" fill="none" stroke="#a8a8a8" stroke-width=".800"/><rect x="1015" y="55" width="13" height="5" fill="url(#gb)"/><path d="M1015.3 59.5H1027.5V55.3" fill="none" stroke="#3a3a3a" stroke-width="1.3"/><path d="M1015.4 59V55.4H1027" fill="none" stroke="#a8a8a8" stroke-width=".800"/><path d="M1015 51.5h13M1013 60.5h17" stroke="#222" stroke-width="1.3"/><path d="M1044.5 45v17M1051.5 47v13" stroke="#222" stroke-width="1.3"/><rect x="1045" y="48" width="4" height="10" fill="url(#gb)"/><path d="M1045.3 57.5H1048.5V48.3" fill="none" stroke="#3a3a3a" stroke-width="1.3"/><path d="M1045.4 57V48.4H1048" fill="none" stroke="#a8a8a8" stroke-width=".800"/><rect x="1052" y="50" width="3" height="6" fill="url(#gb)"/><path d="M1052.3 55.5H1054.5V50.3" fill="none" stroke="#3a3a3a" stroke-width="1.3"/><path d="M1052.4 55V50.4H1054" fill="none" stroke="#a8a8a8" stroke-width=".800"/><rect x="1064" y="47" width="4" height="12" fill="url(#gb)"/><path d="M1064.3 58.5H1067.5V47.3" fill="none" stroke="#3a3a3a" stroke-width="1.3"/><path d="M1064.4 58V47.4H1067" fill="none" stroke="#a8a8a8" stroke-width=".800"/><rect x="1071" y="49" width="4" height="8" fill="url(#gb)"/><path d="M1071.3 56.5H1074.5V49.3" fill="none" stroke="#3a3a3a" stroke-width="1.3"/><path d="M1071.4 56V49.4H1074" fill="none" stroke="#a8a8a8" stroke-width=".800"/><path d="M1066 44v19M1073 45v17" stroke="#222" stroke-width="1.2"/><rect x="1085" y="48" width="4" height="10" fill="url(#gb)"/><path d="M1085.3 57.5H1088.5V48.3" fill="none" stroke="#3a3a3a" stroke-width="1.3"/><path d="M1085.4 57V48.4H1088" fill="none" stroke="#a8a8a8" stroke-width=".800"/><rect x="1091" y="50" width="3" height="6" fill="url(#gb)"/><path d="M1091.3 55.5H1093.5V50.3" fill="none" stroke="#3a3a3a" stroke-width="1.3"/><path d="M1091.4 55V50.4H1093" fill="none" stroke="#a8a8a8" stroke-width=".800"/><path d="M1089.5 47v13M1095.5 45v17" stroke="#222" stroke-width="1.3"/><rect x="1112" y="45.5" width="15" height="15" fill="none" stroke="#555" stroke-dasharray="2 1.5"/><rect x="1110" y="43.5" width="4" height="4" fill="#fff" stroke="#555" stroke-width=".8"/><rect x="1110" y="51" width="4" height="4" fill="#fff" stroke="#555" stroke-width=".8"/><rect x="1110" y="58.5" width="4" height="4" fill="#fff" stroke="#555" stroke-width=".8"/><rect x="1117.5" y="43.5" width="4" height="4" fill="#fff" stroke="#555" stroke-width=".8"/><rect x="1117.5" y="51" width="4" height="4" fill="#222" stroke="#555" stroke-width=".8"/><rect x="1117.5" y="58.5" width="4" height="4" fill="#fff" stroke="#555" stroke-width=".8"/><rect x="1125" y="43.5" width="4" height="4" fill="#fff" stroke="#555" stroke-width=".8"/><rect x="1125" y="51" width="4" height="4" fill="#fff" stroke="#555" stroke-width=".8"/><rect x="1125" y="58.5" width="4" height="4" fill="#fff" stroke="#555" stroke-width=".8"/></svg><div class="inp" style="left:1147px;width:75px"></div><svg class="a" style="left:1148px;top:43px" width="12" height="19"><rect x="0.5" y="0.5" width="11" height="18" fill="#ececec" stroke="#c8c8c8"/><path d="M0 9.5h12" stroke="#c8c8c8"/><path d="M3 7h6l-3-3.8zM3 12h6l-3 3.8z" fill="#4a6ec8"/></svg><div class="inp" style="left:1243px;width:74px"></div><svg class="a" style="left:1244px;top:43px" width="12" height="19"><rect x="0.5" y="0.5" width="11" height="18" fill="#ececec" stroke="#c8c8c8"/><path d="M0 9.5h12" stroke="#c8c8c8"/><path d="M3 7h6l-3-3.8zM3 12h6l-3 3.8z" fill="#4a6ec8"/></svg><div class="inp" style="left:1340px;width:75px"></div><svg class="a" style="left:1341px;top:43px" width="12" height="19"><rect x="0.5" y="0.5" width="11" height="18" fill="#ececec" stroke="#c8c8c8"/><path d="M0 9.5h12" stroke="#c8c8c8"/><path d="M3 7h6l-3-3.8zM3 12h6l-3 3.8z" fill="#4a6ec8"/></svg><div class="inp" style="left:1449px;width:75px"></div><svg class="a" style="left:1450px;top:43px" width="12" height="19"><rect x="0.5" y="0.5" width="11" height="18" fill="#ececec" stroke="#c8c8c8"/><path d="M0 9.5h12" stroke="#c8c8c8"/><path d="M3 7h6l-3-3.8zM3 12h6l-3 3.8z" fill="#4a6ec8"/></svg><svg class="a" style="left:1415px;top:44px" width="20" height="18"><path d="M1 9h4M15 9h4" stroke="#333" stroke-width="1.3"/><rect x="6.5" y="2.5" width="7" height="13" rx="3" fill="#cfcfcf" stroke="#333" stroke-width="1.3"/><path d="M10 5v8" stroke="#333" stroke-width="1.6"/></svg><svg class="a" style="left:1897px;top:41px" width="18" height="12"><path d="M1 3h5l-2.5 3z" fill="#444"/><path d="M8 2h9M8 5h9M8 8h9M8 11h9" stroke="#555" stroke-width="1.2"/></svg><div class="a" style="left:65px;top:69px;width:1636px;height:19px;background:linear-gradient(#a0a0a0,#8b8b8b)"></div><div class="a" style="left:4px;top:68px;width:1911px;height:1px;background:#707070"></div><div class="a" style="left:65px;top:69px;width:326px;height:19px;background:linear-gradient(#e9e9e9,#d4d4d4);border-right:1px solid #7c7c7c"></div><svg class="a" style="left:373px;top:72px" width="13" height="13"><rect x="0.5" y="0.5" width="11" height="11" rx="1.5" fill="#dcdcdc" stroke="#8a8a8a"/><path d="M3 3l6 6M9 3l-6 6" stroke="#555" stroke-width="1.3"/></svg><div class="a" style="left:5px;top:69px;width:60px;height:11px;background:linear-gradient(#5a5a5a,#2e2e2e)"></div><svg class="a" style="left:8px;top:71px" width="10" height="8"><path d="M4 0.5v6l-3.5-3zM8.5 0.5v6l-3.5-3z" fill="#d8d8d8"/></svg><div class="a" style="left:1701px;top:69px;width:214px;height:12px;background:linear-gradient(#5a5a5a,#333)"></div><svg class="a" style="left:1903px;top:71px" width="10" height="8"><path d="M0.5 0.5v6l3.5-3zM5 0.5v6l3.5-3z" fill="#d8d8d8"/></svg><div class="a" style="left:65px;top:1019px;width:1636px;height:16px;background:#ebebeb;border-top:1px solid #bcbcbc"></div><div class="a" style="left:65px;top:1020px;width:62px;height:15px;background:#fafafa;border-right:1px solid #c6c6c6"></div><svg class="a" style="left:112px;top:1026px" width="9" height="6"><path d="M0 0.5h8l-4 4.5z" fill="#111"/></svg><div class="a" style="left:127px;top:1020px;width:32px;height:15px;background:#d9d9d9"></div><svg class="a" style="left:128px;top:1021px" width="105" height="13"><g fill="#8a8a8a"><rect x="2.5" y="2" width="1.5" height="8"/><path d="M9.5 2v8l-5-4z"/><path d="M24 2v8l-5-4z"/></g><g fill="#6a6a6a"><path d="M79 2v8l5-4z"/><path d="M93 2v8l5-4z"/><rect x="98.5" y="2" width="1.5" height="8"/></g></svg><div class="a" style="left:159px;top:1020px;width:42px;height:15px;background:#fafafa"></div><svg class="a" style="left:189px;top:1026px" width="9" height="6"><path d="M0 0.5h8l-4 4.5z" fill="#111"/></svg><div class="a" style="left:235px;top:1020px;width:179px;height:14px;background:#dcdcdc;border:1px solid #c4c4c4"></div><svg class="a" style="left:401px;top:1021px" width="30" height="13"><path d="M1 0.5v11l7-5.5z" fill="#111"/><path d="M23.5 2v8l-5-4z" fill="#333"/></svg><div class="a" style="left:1042px;top:1021px;width:15px;height:13px;background:linear-gradient(#f4f4f4,#c8c8c8);border:1px solid #a8a8a8;border-radius:2px"></div><div class="a" style="left:1684px;top:89px;width:16px;height:930px;background:#f5f5f5;border-left:1px solid #e2e2e2"></div><div class="a" style="left:1684px;top:1019px;width:16px;height:16px;background:#fdfdfd"></div><svg class="a" style="left:1672px;top:1022px" width="8" height="10"><path d="M1.5 0.5v8l4.5-4z" fill="#444"/></svg><div class="a" style="left:1700px;top:69px;width:1px;height:966px;background:#555"></div><div class="a" style="left:4px;top:1035px;width:1911px;height:1px;background:#5c5c5c"></div><svg class="a" style="left:1688px;top:93px" width="10" height="8"><path d="M0 6.5h9l-4.5-5.5z" fill="#555"/></svg><div class="a" style="left:1686px;top:547px;width:13px;height:14px;background:linear-gradient(90deg,#f6f6f6,#c4c4c4);border:1px solid #a8a8a8;border-radius:2px"></div><div class="a" style="left:5px;top:80px;width:60px;height:478px;background:linear-gradient(90deg,#d9d9d9,#d2d2d2)"></div><div class="a" style="left:5px;top:558px;width:60px;height:477px;background:#646464"></div><div class="a" style="left:4px;top:69px;width:1px;height:966px;background:#8a8a8a"></div><svg class="a" style="left:14px;top:85px" width="44" height="4"><path d="M0 0.5h44M0 2.5h44" stroke="#a2a2a2" stroke-width="1" stroke-dasharray="1 1"/></svg><svg class="a" style="left:5px;top:80px" width="60" height="478" viewBox="5 80 60 478"><defs><linearGradient id="tg" x1="0" y1="0" x2="0" y2="1"><stop offset="0" stop-color="#fafafa"/><stop offset="1" stop-color="#8e8e8e"/></linearGradient><linearGradient id="tgh" x1="0" y1="0" x2="1" y2="0"><stop offset="0" stop-color="#fff"/><stop offset="1" stop-color="#111"/></linearGradient></defs><path d="M8 141.5h53" stroke="#9e9e9e"/><path d="M8 142.5h53" stroke="#ececec"/><path d="M8 229.5h53" stroke="#9e9e9e"/><path d="M8 230.5h53" stroke="#ececec"/><path d="M8 296.5h53" stroke="#9e9e9e"/><path d="M8 297.5h53" stroke="#ececec"/><path d="M8 343.5h53" stroke="#9e9e9e"/><path d="M8 344.5h53" stroke="#ececec"/><path d="M8 367.5h53" stroke="#9e9e9e"/><path d="M8 368.5h53" stroke="#ececec"/><path d="M8 414.5h53" stroke="#9e9e9e"/><path d="M8 415.5h53" stroke="#ececec"/><path d="M8 438.5h53" stroke="#9e9e9e"/><path d="M8 439.5h53" stroke="#ececec"/><path d="M8 491.5h53" stroke="#9e9e9e"/><path d="M8 492.5h53" stroke="#ececec"/><path d="M8 511.5h53" stroke="#9e9e9e"/><path d="M8 512.5h53" stroke="#ececec"/><path d="M8 533.5h53" stroke="#9e9e9e"/><path d="M8 534.5h53" stroke="#ececec"/><rect x="35.5" y="98.5" width="23" height="20" rx="3" fill="#c4c4c4" stroke="#555"/><g transform="translate(21.3 107.8) scale(.84)"><path d="M-5-8l9.5 9.5-4 .3 2.4 5-2 .9-2.4-5-3.5 2.7z" fill="#1a1a1a"/></g><g transform="translate(47 109) scale(.8)"><path d="M-3.5-8l9.5 9.5-4 .3 2.4 5-2 .9-2.4-5-3.5 2.7z" fill="#fff" stroke="#1a1a1a" stroke-width="1.5"/></g><g transform="translate(22 128)"><path d="M-3-2l10 9" stroke="#333" stroke-width="2"/><path d="M-4-8v10M-9-3h10M-7.5-6.5l7 7M-0.5-6.5l-7 7" stroke="#555" stroke-width=".9"/></g><g transform="translate(47 130)"><path d="M-6-4c0-3 10-4 11 0c1 3-7 5-9 3c-1 2 1 3 0 6" fill="none" stroke="#444" stroke-width="1.2"/><path d="M0-3l8 4-8 4z" fill="#f4f4f4" stroke="#222" stroke-width="1"/></g><g transform="translate(22 155)"><path d="M0-10l4.5 8-2 5.5h-5l-2-5.5z" fill="#f2f2f2" stroke="#222" stroke-width="1.2"/><path d="M0-9v6" stroke="#222"/><circle cx="0" cy="-2.5" r="1" fill="#222"/><rect x="-3" y="4.3" width="6" height="2.7" fill="#444"/></g><path d="M30 163h4v-4z" fill="#111"/><text x="47.2" y="160" text-anchor="middle" font-family="Liberation Serif, serif" font-size="18.5" fill="#1a1a1a">T</text><path d="M55 163h4v-4z" fill="#111"/><g transform="translate(22 176)"><path d="M-6-8l13 12" stroke="#222" stroke-width="1.6"/></g><path d="M30 183h4v-4z" fill="#111"/><g transform="translate(47 176)"><rect x="-6.5" y="-6" width="13" height="10" fill="url(#tg)" stroke="#666"/></g><path d="M55 183h4v-4z" fill="#111"/><g transform="translate(22 196)"><path d="M8-8l-9 9" stroke="#444" stroke-width="2.2"/><path d="M-1 1c-2 0-4 3-7 5c3 1 8 0 9-3z" fill="#555"/></g><g transform="translate(47 196)"><path d="M6-8l3 3-11 10-4 1.5 1-4z" fill="#eee" stroke="#333" stroke-width="1.1"/><path d="M-6 6l-1.5 1.5" stroke="#111" stroke-width="1.5"/></g><path d="M55 202h4v-4z" fill="#111"/><g transform="translate(22 217)"><path d="M-8-3h9l4-4v8l-4 4h-9z" fill="#eee" stroke="#222" stroke-width="1.2"/><path d="M9-9l-8 7" stroke="#444" stroke-width="1.8"/><path d="M1-3c-3 0-4 3-7 4c3 1 7 0 8-2z" fill="#777"/></g><g transform="translate(47 217)"><path d="M-8 3l8-8h9l-8 8z" fill="#f6f6f6" stroke="#333" stroke-width="1.1"/><path d="M-8 3v3h9v-3M1 6l8-8v-3" fill="#bbb" stroke="#333" stroke-width="1.1"/></g><path d="M55 223h4v-4z" fill="#111"/><g transform="translate(22 242)"><circle cx="0" cy="0" r="6.2" fill="none" stroke="#222" stroke-width="1.4" stroke-dasharray="1.5 2.2"/><path d="M-6-1a6.2 6.2 0 0 1 11-3" fill="none" stroke="#222" stroke-width="1.4"/><path d="M-6-7v5h5z" fill="#222"/></g><path d="M30 248h4v-4z" fill="#111"/><g transform="translate(47 242)"><rect x="-7.5" y="-7.5" width="12" height="10" fill="url(#tg)" stroke="#333"/><rect x="1.5" y="-1.5" width="6" height="6" fill="#ccc" stroke="#777"/><path d="M-5-5l5 4.5M-5-5h3.5M-5-5v3.5" stroke="#111" stroke-width="1.2" fill="none"/></g><path d="M55 248h4v-4z" fill="#111"/><g transform="translate(22 263)"><path d="M-9 0c3-5 5-2 7 1s6 2 6-6" fill="none" stroke="#666" stroke-width="3"/><path d="M-4-6l12 13" stroke="#222" stroke-width="1.1"/><circle cx="3" cy="2" r="1.5" fill="#fff" stroke="#222"/><circle cx="7.5" cy="7" r="1.3" fill="#fff" stroke="#222"/></g><path d="M30 269h4v-4z" fill="#111"/><g transform="translate(47 263)"><rect x="-3.5" y="-5.5" width="11" height="10" fill="none" stroke="#111" stroke-width="1.5" stroke-dasharray="2 1.8"/><path d="M-8-6l8 6-8 5z" fill="#222"/></g><g transform="translate(22 284)"><ellipse cx="-2" cy="-3" rx="7" ry="5" fill="#e8e8e8" stroke="#555" stroke-width="1.2"/><circle cx="-5" cy="-3" r=".9" fill="#333"/><circle cx="-2" cy="-3" r=".9" fill="#333"/><circle cx="1" cy="-3" r=".9" fill="#333"/><path d="M1-1l8 6-4 .500-2 3.5z" fill="#fff" stroke="#222" stroke-width="1"/></g><path d="M30 291h4v-4z" fill="#111"/><g transform="translate(47 284)"><path d="M-7-9v17l14 1M-7-9l11 5v13M-7-3l11 3M-7 3l11 1.5M-2-7v15.5M2-5v14" fill="none" stroke="#555" stroke-width="1.1"/><path d="M-7 8l14 1v2l-14-1z" fill="#999"/></g><path d="M55 291h4v-4z" fill="#111"/><g transform="translate(22 309)"><rect x="-7.5" y="-6" width="15" height="11" fill="#eee" stroke="#333"/><path d="M-7-1c4-3 9 2 14-1M-2-6c-2 4 2 7 0 11M3-6c2 4-2 7 1 11M-7 2c4 2 9-2 14 1" fill="none" stroke="#555" stroke-width=".9"/></g><g transform="translate(47 309)"><rect x="-7.5" y="-6" width="15" height="11" fill="url(#tgh)" stroke="#444"/></g><g transform="translate(22 331)"><path d="M-7 7l8-9 2 2-8 8z" fill="#eee" stroke="#333"/><path d="M0-3l5-5 3 3-5 5z" fill="#222"/></g><path d="M30 337h4v-4z" fill="#111"/><g transform="translate(47 331)"><rect x="-7" y="-8" width="5" height="5" fill="#ddd" stroke="#777"/><circle cx="5" cy="5" r="3.5" fill="#e4e4e4" stroke="#777"/><path d="M-3-3l2 2M0 0l1 1M-5 0l1 1M-1-5l1 1M2 1l.500.5M-2 2l1 1" stroke="#555" stroke-width="1.3"/></g><g transform="translate(22 354)"><rect x="-3.5" y="-3" width="9" height="11" rx="1.5" fill="#e4e4e4" stroke="#333"/><circle cx="1" cy="3" r="2.2" fill="none" stroke="#444"/><rect x="-1" y="-6" width="4" height="3" fill="#666"/><path d="M-8-8l1 1M-6-5l1 1M-9-4l1 1M-5-9l1 1" stroke="#444" stroke-width="1.2"/></g><path d="M30 361h4v-4z" fill="#111"/><g transform="translate(47 354)"><path d="M-7.5-6v13h16" fill="none" stroke="#333" stroke-width="1.1"/><rect x="-5" y="-1" width="3" height="7" fill="#aaa" stroke="#444" stroke-width=".8"/><rect x="-1" y="-4" width="3" height="10" fill="#ccc" stroke="#444" stroke-width=".8"/><rect x="3" y="-7" width="3" height="13" fill="#999" stroke="#444" stroke-width=".8"/></g><path d="M55 361h4v-4z" fill="#111"/><g transform="translate(22 380)"><rect x="-5.5" y="-5.5" width="11" height="11" fill="#e8e8e8" stroke="#333"/><path d="M-8-5.5h16M-8 5.5h16M-5.5-8v16M5.5-8v16" stroke="#333" stroke-width=".9" stroke-dasharray="1.5 1.2"/></g><g transform="translate(47 380)"><path d="M7-8l-12 12-2 3 4-1 11-12z" fill="#ddd" stroke="#333" stroke-width="1"/><path d="M-2-3l5 5" stroke="#333" stroke-width="2"/></g><path d="M55 386h4v-4z" fill="#111"/><g transform="translate(22 401)"><path d="M-6 1l-2-4 2-1 2 3v-7h2v5l1-6h2v6l1.5-5h2l-1 6 2-3 1.5 1-3 6c-1 3-2 5-3 6h-5c-1-3-3-5-5-7z" fill="#fff" stroke="#333" stroke-width="1"/></g><path d="M30 408h4v-4z" fill="#111"/><g transform="translate(47 401)"><circle cx="-2" cy="-2" r="5" fill="#f2f2f2" stroke="#333" stroke-width="1.4"/><path d="M2 2l6 6" stroke="#333" stroke-width="2.6"/></g><g transform="translate(22 426)"><path d="M5-8l3 3-12 12-4 1 1-4z" fill="#fff" stroke="#222" stroke-width="1.2"/><path d="M3-6l3 3" stroke="#222"/></g><rect x="27.5" y="458.5" width="28" height="28" fill="#fff" stroke="#111"/><rect x="35.5" y="466.5" width="12" height="12" fill="#d6d6d6" stroke="#111"/><path d="M28 486L55 459" stroke="#c8102e" stroke-width="2"/><rect x="13" y="444.5" width="28.5" height="28" fill="#fff" stroke="#111"/><rect x="14.6" y="446.1" width="25.3" height="24.8" fill="#d15555"/><path d="M48 446c3 0 6 2 6 6M45 446l4-2.5v5zM54 455l-2.5-4h5z" fill="#222" stroke="#222" stroke-width="1" fill-rule="nonzero"/><rect x="17.5" y="481.5" width="6" height="6" fill="#111"/><rect x="14.5" y="478.5" width="6" height="6" fill="#fff" stroke="#111"/><rect x="9.5" y="494.5" width="15" height="15" rx="2" fill="#c0c0c0" stroke="#555"/><rect x="12" y="497" width="10" height="10" fill="#d15555"/><rect x="30" y="497" width="9" height="10" fill="url(#tgh)"/><rect x="47" y="497" width="10" height="10" fill="#fff"/><path d="M47 507l10-10" stroke="#c8102e" stroke-width="1.8"/><rect x="9.5" y="514.5" width="15" height="16" rx="2" fill="#c0c0c0" stroke="#555"/><circle cx="15.5" cy="521" r="4" fill="#f4f4f4" stroke="#333"/><rect x="16.5" y="522.5" width="6" height="6" fill="#888" stroke="#333"/><circle cx="37.5" cy="523.5" r="4.5" fill="#333"/><circle cx="34.5" cy="521" r="4.5" fill="#f0f0f0" stroke="#444"/><circle cx="51.5" cy="521.5" r="4" fill="#f0f0f0" stroke="#999"/><path d="M51.5 521.5v-4a4 4 0 0 1 4 4z" fill="#aaa"/><rect x="25.5" y="544.5" width="13" height="8" fill="#f4f4f4" stroke="#555"/><rect x="31.5" y="539.5" width="14" height="9" fill="url(#tg)" stroke="#444"/></svg><div class="red" style="left:29px;top:90px;width:36px;height:34.5px"></div><div class="red" style="left:4.5px;top:138px;width:36px;height:33px"></div><div class="a" style="left:1701px;top:81px;width:214px;height:230px;background:#d7d7d7"></div><div class="tabbar" style="top:81px"></div><div class="tab" style="left:1701px;top:81px;width:40px"></div><div class="tab on" style="left:1741px;top:81px;width:61px"></div><div class="tab" style="left:1802px;top:81px;width:57px;border-left:1px solid #6e6e6e"></div><svg class="a" style="left:1895px;top:84px" width="18" height="12"><path d="M0.5 2.5h5l-2.5 3.5z" fill="#333"/><path d="M7 1.5h9.5M7 4.5h9.5M7 7.5h9.5M7 10.5h9.5" stroke="#444" stroke-width="1.3"/></svg><div class="a" style="left:1703px;top:99px;width:210px;height:1px;background:#111"></div><div class="psb" style="top:100px;height:194px"></div><svg class="a" style="left:1901px;top:108px" width="9" height="6"><path d="M0 5.5h8l-4-5z" fill="#8a8a8a"/></svg><svg class="a" style="left:1901px;top:283px" width="9" height="6"><path d="M0 0.5h8l-4 5z" fill="#8a8a8a"/></svg><div class="a" style="left:1703px;top:293px;width:195px;height:1px;background:#111"></div><svg class="a" style="left:1703px;top:100px" width="196" height="86"><rect x="0" y="0" width="196" height="56" fill="#111"/><rect x="0" y="56" width="28" height="14" fill="#111"/><rect x="0" y="0" width="13" height="13" fill="#fff"/><path d="M0.5 12.5L12.5 0.5" stroke="#c8102e" stroke-width="1.8"/><rect x="14" y="0" width="13" height="13" fill="#fff"/><circle cx="20.5" cy="6.5" r="4.3" fill="none" stroke="#111" stroke-width="1"/><circle cx="20.5" cy="6.5" r="1.2" fill="#111"/><path d="M20.5 0.5v12M14.5 6.5h12" stroke="#111" stroke-width=".9"/><rect x="28" y="0" width="13" height="13" fill="#000000"/><rect x="42" y="0" width="13" height="13" fill="#dc1c24"/><rect x="56" y="0" width="13" height="13" fill="#fff100"/><rect x="70" y="0" width="13" height="13" fill="#00963f"/><rect x="84" y="0" width="13" height="13" fill="#009ee3"/><rect x="98" y="0" width="13" height="13" fill="#411f89"/><rect x="112" y="0" width="13" height="13" fill="#e5007d"/><rect x="126" y="0" width="13" height="13" fill="#c81e30"/><rect x="140" y="0" width="13" height="13" fill="#e83c32"/><rect x="154" y="0" width="13" height="13" fill="#e85a28"/><rect x="168" y="0" width="13" height="13" fill="#f29614"/><rect x="182" y="0" width="13" height="13" fill="#f6b43c"/><rect x="0" y="14" width="13" height="13" fill="#f6eb28"/><rect x="14" y="14" width="13" height="13" fill="#dee114"/><rect x="28" y="14" width="13" height="13" fill="#8cc828"/><rect x="42" y="14" width="13" height="13" fill="#3caf37"/><rect x="56" y="14" width="13" height="13" fill="#0a9641"/><rect x="70" y="14" width="13" height="13" fill="#146937"/><rect x="84" y="14" width="13" height="13" fill="#37af69"/><rect x="98" y="14" width="13" height="13" fill="#23a5a0"/><rect x="112" y="14" width="13" height="13" fill="#50a5e1"/><rect x="126" y="14" width="13" height="13" fill="#326ec3"/><rect x="140" y="14" width="13" height="13" fill="#372896"/><rect x="154" y="14" width="13" height="13" fill="#2d2873"/><rect x="168" y="14" width="13" height="13" fill="#691991"/><rect x="182" y="14" width="13" height="13" fill="#9b008c"/><rect x="0" y="28" width="13" height="13" fill="#a01464"/><rect x="14" y="28" width="13" height="13" fill="#d70a5a"/><rect x="28" y="28" width="13" height="13" fill="#e61478"/><rect x="42" y="28" width="13" height="13" fill="#c8b996"/><rect x="56" y="28" width="13" height="13" fill="#9b8773"/><rect x="70" y="28" width="13" height="13" fill="#736455"/><rect x="84" y="28" width="13" height="13" fill="#55483c"/><rect x="98" y="28" width="13" height="13" fill="#c39b69"/><rect x="112" y="28" width="13" height="13" fill="#a57d50"/><rect x="126" y="28" width="13" height="13" fill="#8c643c"/><rect x="140" y="28" width="13" height="13" fill="#785028"/><rect x="154" y="28" width="13" height="13" fill="#64411e"/><rect x="168" y="28" width="13" height="13" fill="#412d1e"/><rect x="182" y="28" width="13" height="13" fill="#000000"/><rect x="0" y="42" width="13" height="13" fill="#3c3c3c"/><rect x="14" y="42" width="13" height="13" fill="#5a5a5a"/><rect x="28" y="42" width="13" height="13" fill="#737373"/><rect x="42" y="42" width="13" height="13" fill="#8c8c8c"/><rect x="56" y="42" width="13" height="13" fill="#a0a0a0"/><rect x="70" y="42" width="13" height="13" fill="#b4b4b4"/><rect x="84" y="42" width="13" height="13" fill="#c8c8c8"/><rect x="98" y="42" width="13" height="13" fill="#dcdcdc"/><rect x="112" y="42" width="13" height="13" fill="#eeeeee"/><rect x="126" y="42" width="13" height="13" fill="#f6f6f6"/><rect x="140" y="42" width="13" height="13" fill="#e11e28"/><rect x="154" y="42" width="13" height="13" fill="#eb641e"/><rect x="168" y="42" width="13" height="13" fill="#fae11e"/><rect x="182" y="42" width="13" height="13" fill="#0a9641"/><rect x="0" y="56" width="13" height="13" fill="#372891"/><rect x="14" y="56" width="13" height="13" fill="#822891"/><rect x="0" y="70" width="98" height="14.5" fill="#111"/><rect x="0" y="70" width="13" height="13.5" fill="#f4f4f4"/><path d="M1.5 75.5l1.5-2h3.5l1.5 1.5h3.5v6.5h-10z" fill="#d8d8d8" stroke="#777" stroke-width=".9"/><rect x="14" y="70" width="13" height="13.5" fill="#d75555"/><rect x="28" y="70" width="13" height="13.5" fill="#f5b43c"/><rect x="27" y="70" width="1" height="13.5" fill="#fbf3d8"/><rect x="42" y="70" width="13" height="13.5" fill="#fadc8c"/><rect x="41" y="70" width="1" height="13.5" fill="#fbf3d8"/><rect x="56" y="70" width="13" height="13.5" fill="#f0c83c"/><rect x="55" y="70" width="1" height="13.5" fill="#fbf3d8"/><rect x="70" y="70" width="13" height="13.5" fill="#82a028"/><rect x="69" y="70" width="1" height="13.5" fill="#fbf3d8"/><rect x="84" y="70" width="13" height="13.5" fill="#50a0b4"/><rect x="83" y="70" width="1" height="13.5" fill="#fbf3d8"/></svg><svg class="a" style="left:1701px;top:294px" width="200" height="17" viewBox="1701 294 200 17"><g transform="translate(1718 302)"><rect x="-7.5" y="-6.5" width="9" height="8" fill="#ddd" stroke="#444"/><rect x="-4.5" y="-3.5" width="10" height="9" fill="#f0f0f0" stroke="#444"/><path d="M-4.5-.500h10M-4.5 2.5h10M-1.5-.500v6M2-.500v6" stroke="#666" stroke-width=".8"/><path d="M7 7h3v-3z" fill="#111"/></g><rect x="1752.5" y="296.5" width="10" height="10" fill="#8c8c8c" stroke="#555"/><path d="M1765 308h3v-3z" fill="#111"/><rect x="1783.5" y="297.5" width="11" height="9" fill="#e4e4e4" stroke="#9a9a9a"/><path d="M1786 300.5h6M1786 303.5h6" stroke="#aaa"/><path d="M1812.5 298.5h4l1 1.5h6v7h-11z" fill="#ececec" stroke="#555"/><path d="M1823 298h5M1825.5 295.5v5" stroke="#111" stroke-width="1.5"/><g transform="translate(1852 302)"><rect x="-5.5" y="-5.5" width="11" height="11" fill="#f8f8f8" stroke="#333"/><path d="M-5 5v-5h5" fill="none" stroke="#333"/><rect x="-5" y="0" width="5" height="5" fill="#aaa" stroke="#333" stroke-width=".8"/></g><g transform="translate(1882 302)"><path d="M-4-3.5h8l-.800 9h-6.4z" fill="#f2f2f2" stroke="#333" stroke-width="1"/><path d="M-5-4h10M-2-6h4" stroke="#333" stroke-width="1.3"/><path d="M-1.5-1.5v5M1.5-1.5v5" stroke="#555" stroke-width=".9"/></g></svg><svg class="a" style="left:1903px;top:300px" width="10" height="10"><path d="M8.5 1v9M6.5 3v7M4.5 5v5M2.5 7v3M0.5 9v1" stroke="#8c8c8c" stroke-width="1" stroke-dasharray="1 1"/></svg><div class="sep" style="top:310px"></div><div class="a" style="left:1701px;top:314px;width:214px;height:230px;background:#d7d7d7"></div><div class="tabbar" style="top:314px"></div><div class="tab on" style="left:1701px;top:314px;width:41px"></div><div class="tab" style="left:1742px;top:314px;width:56px;border-left:1px solid #6e6e6e"></div><div class="tab" style="left:1798px;top:314px;width:64px"></div><svg class="a" style="left:1895px;top:317px" width="18" height="12"><path d="M0.5 2.5h5l-2.5 3.5z" fill="#333"/><path d="M7 1.5h9.5M7 4.5h9.5M7 7.5h9.5M7 10.5h9.5" stroke="#444" stroke-width="1.3"/></svg><div class="psb" style="top:333px;height:193px"></div><svg class="a" style="left:1902px;top:340px" width="9" height="6"><path d="M0 5.5h8l-4-5z" fill="#666"/></svg><svg class="a" style="left:1902px;top:516px" width="9" height="6"><path d="M0 0.5h8l-4 5z" fill="#666"/></svg><div class="a" style="left:1900px;top:351px;width:12px;height:14px;background:linear-gradient(90deg,#f8f8f8,#c6c6c6);border:1px solid #adadad;border-radius:2px"></div><svg class="a" style="left:1703px;top:332px" width="210" height="195" viewBox="0 0 210 195"><rect x="0" y="0" width="195" height="195" fill="#fff"/><path d="M0 0.5h210" stroke="#111" stroke-width="1.2"/><path d="M0 32.5h195" stroke="#111" stroke-width="1.1"/><path d="M0 64.5h195" stroke="#111" stroke-width="1.1"/><path d="M0 96.5h195" stroke="#111" stroke-width="1.1"/><path d="M0 128.5h195" stroke="#111" stroke-width="1.1"/><path d="M0 160.5h195" stroke="#111" stroke-width="1.1"/><path d="M0 192.5h195" stroke="#111" stroke-width="1.1"/><path d="M0 194.5h195" stroke="#111" stroke-width="1"/><path d="M31.5 1v32" stroke="#111" stroke-width="1.1"/><path d="M31.5 161v3M31.5 189v4" stroke="#111" stroke-width="1.1"/><path d="M63.5 1v32" stroke="#111" stroke-width="1.1"/><path d="M63.5 161v3M63.5 189v4" stroke="#111" stroke-width="1.1"/><path d="M95.5 1v32" stroke="#111" stroke-width="1.1"/><path d="M95.5 161v3M95.5 189v4" stroke="#111" stroke-width="1.1"/><path d="M127.5 1v32" stroke="#111" stroke-width="1.1"/><path d="M127.5 161v3M127.5 189v4" stroke="#111" stroke-width="1.1"/><path d="M159.5 1v32" stroke="#111" stroke-width="1.1"/><path d="M159.5 161v3M159.5 189v4" stroke="#111" stroke-width="1.1"/><path d="M191.5 1v32" stroke="#111" stroke-width="1.1"/><circle cx="15.5" cy="16.5" r=".800" fill="#111"/><ellipse cx="47.5" cy="16.5" rx="2.4" ry="1.3" transform="rotate(15 47.5 16.5)" fill="#111"/><path d="M79.5 14.5v4" stroke="#bbb" stroke-width=".6"/><path d="M111.5 14.8l1.7 1.7-1.7 1.7-1.7-1.7z" fill="#111"/><circle cx="143.5" cy="16.5" r="3.5" fill="#111"/><circle cx="175.5" cy="16.5" r="7.5" fill="#111"/><rect x="6" y="47" width="148" height="3.2" fill="#111"/><path d="M8 80.5c10-1 20-1.8 30-1.6c20-.600 40-.500 60-1.3c30-.600 60-1.6 91-.600c-10 1.5-20 1.2-30 1.6c-20 .800-40 .800-60 1.7c-20 .600-40 1.5-60 1.4c-10 0-20 .200-31-1.2z" fill="#111"/><path d="M6 112.5c12-3.5 24-4.2 36-4.2h111c12 0 24 1 36 4.2c-12 3.2-24 4.2-36 4.2h-111c-12 0-24-.700-36-4.2z" fill="#111"/><path d="M6 145c25-2.5 55-3.5 85-3.5c10 0 18 .500 24 1c-2-2-3-4-1-5.5c2-1.5 6-1 8 1c1 1 0 2 1 2.5c8-1 18-5 28-6.5c8-1 14 0 16 3c6-1.5 12-1 17 2c4 2.5 6 6 6 9c-5-3.5-11-5.5-18-5.5c-8 0-16 3-26 4.5c-8 1-14 .800-18 2c-3 1-3 2.5-2 3.5c-4 1.5-8 0-11-1.5c-5-2.5-8-4-12-4.5c-3-.300-5 1-8 .500c-2-.500-2-2-4-2.5c-20-1-50-.500-85 .500z" fill="#111"/><path d="M13.4 192.5v-11.5q0-4.2 4.2-4.2h13.4" fill="none" stroke="#111" stroke-width="7.5"/><path d="M13.4 192.5v-11.5q0-4.2 4.2-4.2h13.4" fill="none" stroke="#c8202a" stroke-width="4.5"/><rect x="33" y="173" width="29.5" height="7.5" fill="#111"/><rect x="33" y="174.5" width="29.5" height="4.5" fill="#c8202a"/><rect x="65" y="173" width="29.5" height="7.5" fill="#111"/><rect x="65" y="174.5" width="29.5" height="4.5" fill="#c8202a"/><path d="M97 177h12.2q4.2 0 4.2-4.2v-12" fill="none" stroke="#111" stroke-width="7.5"/><path d="M97 177h12.2q4.2 0 4.2-4.2v-12" fill="none" stroke="#c8202a" stroke-width="4.5"/><rect x="128" y="172.5" width="32" height="8" fill="#111"/><rect x="131" y="174" width="29" height="5" fill="#c8202a"/><path d="M161 172.5h8v-8l21 12-21 12v-8h-8z" fill="#c8202a" stroke="#111" stroke-width="1.3"/></svg><svg class="a" style="left:1701px;top:527px" width="200" height="17" viewBox="1701 527 200 17"><g transform="translate(1718 536)"><rect x="-7.5" y="-6.5" width="9" height="8" fill="#ddd" stroke="#444"/><rect x="-4.5" y="-3.5" width="10" height="9" fill="#f0f0f0" stroke="#444"/><path d="M-4.5-.500h10M-4.5 2.5h10M-1.5-.500v6M2-.500v6" stroke="#666" stroke-width=".8"/><path d="M7 7h3v-3z" fill="#111"/></g><path d="M1780 530l9 9M1789 530l-9 9" stroke="#a0a0a0" stroke-width="1.5"/><path d="M1806 540l8-10" stroke="#a8a8a8" stroke-width="1.8"/><path d="M1815 533h10M1818 537h10M1820 531v4" stroke="#9a9a9a" stroke-width="1.2"/><g transform="translate(1853 535)"><rect x="-5.5" y="-5.5" width="11" height="11" fill="#f8f8f8" stroke="#333"/><path d="M-5 5v-5h5" fill="none" stroke="#333"/><rect x="-5" y="0" width="5" height="5" fill="#aaa" stroke="#333" stroke-width=".8"/></g><g transform="translate(1883 535)"><path d="M-4-3.5h8l-.800 9h-6.4z" fill="#f2f2f2" stroke="#333" stroke-width="1"/><path d="M-5-4h10M-2-6h4" stroke="#333" stroke-width="1.3"/><path d="M-1.5-1.5v5M1.5-1.5v5" stroke="#555" stroke-width=".9"/></g></svg><svg class="a" style="left:1903px;top:532px" width="10" height="10"><path d="M8.5 1v9M6.5 3v7M4.5 5v5M2.5 7v3M0.5 9v1" stroke="#8c8c8c" stroke-width="1" stroke-dasharray="1 1"/></svg><div class="sep" style="top:543px"></div><div class="a" style="left:1701px;top:547px;width:214px;height:210px;background:#d7d7d7"></div><div class="tabbar" style="top:547px"></div><div class="tab on" style="left:1701px;top:547px;width:47px"></div><div class="tab" style="left:1748px;top:547px;width:50px;border-left:1px solid #6e6e6e"></div><div class="tab" style="left:1798px;top:547px;width:47px"></div><svg class="a" style="left:1895px;top:550px" width="18" height="12"><path d="M0.5 2.5h5l-2.5 3.5z" fill="#333"/><path d="M7 1.5h9.5M7 4.5h9.5M7 7.5h9.5M7 10.5h9.5" stroke="#444" stroke-width="1.3"/></svg><div class="psb" style="top:566px;height:174px"></div><svg class="a" style="left:1901px;top:572px" width="9" height="6"><path d="M0 5.5h8l-4-5z" fill="#444"/></svg><svg class="a" style="left:1901px;top:730px" width="9" height="6"><path d="M0 0.5h8l-4 5z" fill="#555"/></svg><div class="a" style="left:1900px;top:585px;width:12px;height:14px;background:linear-gradient(90deg,#f8f8f8,#c6c6c6);border:1px solid #adadad;border-radius:2px"></div><svg class="a" style="left:1703px;top:565px" width="210" height="175" viewBox="1703 565 210 175"><rect x="1703" y="565" width="195" height="175" fill="#fff"/><rect x="1703" y="565" width="44" height="175" fill="#d4d4d4"/><path d="M1703 565.5h210" stroke="#111" stroke-width="1.2"/><path d="M1747.5 566v174" stroke="#111" stroke-width="1.2"/><rect x="1704.5" y="567.5" width="15.5" height="16" fill="#d9d9d9" stroke="#eee"/><rect x="1722.5" y="567.5" width="12.5" height="16" fill="#d9d9d9" stroke="#eee"/><path d="M1703 585.5h44" stroke="#b4b4b4"/><rect x="1738.7" y="568.5" width="4.3" height="15" fill="#0b8050"/><g transform="translate(1712.5 575.6)"><path d="M-6 .500c2-3.5 10-3.5 12 0c-2 3-10 3-12 0z" fill="#fff" stroke="#111" stroke-width="1"/><circle cx="0" cy=".300" r="2.3" fill="#111"/><path d="M-6.5-1.5c3-3.5 10-3.5 13 0" fill="none" stroke="#111" stroke-width="1.5"/></g><rect x="1748" y="566" width="15" height="20" fill="#dcdcdc"/><rect x="1763" y="566" width="134" height="20" fill="#3f8df2"/><path d="M1751.5 572h9l-4.5 6.5z" fill="#fff" stroke="#999" stroke-width="1"/><rect x="1765.5" y="567.5" width="15" height="16" fill="#fff" stroke="#111" stroke-width="1.1"/><path d="M1771.5 580v-7c0-2 3-2 3 0v7" fill="none" stroke="#c8c8c8" stroke-width="1"/><path d="M1771 572.5c1-2 3-2 4 0" stroke="#d15555" fill="none" stroke-width="1.2"/><circle cx="1878.5" cy="575.6" r="4" fill="none" stroke="#274a8a" stroke-width="1.1"/><rect x="1889" y="573.6" width="4.5" height="4.5" fill="#0b8050"/><path d="M1890 566h7v7z" fill="#111"/><rect x="1704.5" y="587.5" width="15.5" height="16" fill="#d9d9d9" stroke="#eee"/><rect x="1722.5" y="587.5" width="12.5" height="16" fill="#d9d9d9" stroke="#eee"/><path d="M1703 605.5h44" stroke="#b4b4b4"/><rect x="1738.7" y="588.5" width="4.3" height="15" fill="#0b8050"/><g transform="translate(1712.5 595.6)"><path d="M-6 .500c2-3.5 10-3.5 12 0c-2 3-10 3-12 0z" fill="#fff" stroke="#111" stroke-width="1"/><circle cx="0" cy=".300" r="2.3" fill="#111"/><path d="M-6.5-1.5c3-3.5 10-3.5 13 0" fill="none" stroke="#111" stroke-width="1.5"/></g><path d="M1778 605.5h119" stroke="#c4c4c4"/><rect x="1780.5" y="587.5" width="15" height="16" fill="#fff" stroke="#111" stroke-width="1.1"/><circle cx="1878.5" cy="595.6" r="4" fill="#fff" stroke="#555" stroke-width="1.1"/><circle cx="1878.5" cy="595.6" r="6" fill="none" stroke="#555" stroke-width="1"/><rect x="1888" y="591.6" width="9" height="8" fill="#0b8050" stroke="#111" stroke-width=".8"/><path d="M1783 602.5c0-6 1-10 4-12c3 3 5 8 5 12z" fill="#d15555"/><rect x="1704.5" y="607.5" width="15.5" height="16" fill="#d9d9d9" stroke="#eee"/><rect x="1722.5" y="607.5" width="12.5" height="16" fill="#d9d9d9" stroke="#eee"/><path d="M1703 625.5h44" stroke="#b4b4b4"/><rect x="1738.7" y="608.5" width="4.3" height="15" fill="#0b8050"/><g transform="translate(1712.5 615.6)"><path d="M-6 .500c2-3.5 10-3.5 12 0c-2 3-10 3-12 0z" fill="#fff" stroke="#111" stroke-width="1"/><circle cx="0" cy=".300" r="2.3" fill="#111"/><path d="M-6.5-1.5c3-3.5 10-3.5 13 0" fill="none" stroke="#111" stroke-width="1.5"/></g><path d="M1778 625.5h119" stroke="#c4c4c4"/><rect x="1780.5" y="607.5" width="15" height="16" fill="#fff" stroke="#111" stroke-width="1.1"/><circle cx="1878.5" cy="615.6" r="4" fill="#fff" stroke="#555" stroke-width="1.1"/><circle cx="1878.5" cy="615.6" r="6" fill="none" stroke="#555" stroke-width="1"/><rect x="1888" y="611.6" width="9" height="8" fill="#0b8050" stroke="#111" stroke-width=".8"/><path d="M1784 618c0-5 1-8 3-10c2 2 4 5 5 8l2 1-2 1v5h-3v-4z" fill="#d15555"/><rect x="1704.5" y="627.5" width="15.5" height="16" fill="#d9d9d9" stroke="#eee"/><rect x="1722.5" y="627.5" width="12.5" height="16" fill="#d9d9d9" stroke="#eee"/><path d="M1703 645.5h44" stroke="#b4b4b4"/><rect x="1738.7" y="628.5" width="4.3" height="15" fill="#0b8050"/><g transform="translate(1712.5 635.6)"><path d="M-6 .500c2-3.5 10-3.5 12 0c-2 3-10 3-12 0z" fill="#fff" stroke="#111" stroke-width="1"/><circle cx="0" cy=".300" r="2.3" fill="#111"/><path d="M-6.5-1.5c3-3.5 10-3.5 13 0" fill="none" stroke="#111" stroke-width="1.5"/></g><path d="M1778 645.5h119" stroke="#c4c4c4"/><rect x="1780.5" y="627.5" width="15" height="16" fill="#fff" stroke="#111" stroke-width="1.1"/><circle cx="1878.5" cy="635.6" r="4" fill="#fff" stroke="#555" stroke-width="1.1"/><path d="M1783 632c3-3 8-3 10-1c1 2-2 3-8 6c3 0 6 .500 8 .500l-.500 2.5c-4-.500-8-.500-11 0c1-3 3-4 7-6c2-1 2-1 0-1.5c-2 0-4 .500-6-.500z" fill="#d15555"/><rect x="1704.5" y="647.5" width="15.5" height="16" fill="#d9d9d9" stroke="#eee"/><rect x="1722.5" y="647.5" width="12.5" height="16" fill="#d9d9d9" stroke="#eee"/><path d="M1703 665.5h44" stroke="#b4b4b4"/><rect x="1738.7" y="648.5" width="4.3" height="15" fill="#0b8050"/><g transform="translate(1712.5 655.6)"><path d="M-6 .500c2-3.5 10-3.5 12 0c-2 3-10 3-12 0z" fill="#fff" stroke="#111" stroke-width="1"/><circle cx="0" cy=".300" r="2.3" fill="#111"/><path d="M-6.5-1.5c3-3.5 10-3.5 13 0" fill="none" stroke="#111" stroke-width="1.5"/></g><path d="M1778 665.5h119" stroke="#c4c4c4"/><rect x="1780.5" y="647.5" width="15" height="16" fill="#fff" stroke="#111" stroke-width="1.1"/><circle cx="1878.5" cy="655.6" r="4" fill="#fff" stroke="#555" stroke-width="1.1"/><rect x="1704.5" y="667.5" width="15.5" height="16" fill="#d9d9d9" stroke="#eee"/><rect x="1722.5" y="667.5" width="12.5" height="16" fill="#d9d9d9" stroke="#eee"/><path d="M1703 685.5h44" stroke="#b4b4b4"/><rect x="1738.7" y="668.5" width="4.3" height="15" fill="#0b8050"/><g transform="translate(1712.5 675.6)"><path d="M-6 .500c2-3.5 10-3.5 12 0c-2 3-10 3-12 0z" fill="#fff" stroke="#111" stroke-width="1"/><circle cx="0" cy=".300" r="2.3" fill="#111"/><path d="M-6.5-1.5c3-3.5 10-3.5 13 0" fill="none" stroke="#111" stroke-width="1.5"/></g><path d="M1778 685.5h119" stroke="#c4c4c4"/><rect x="1780.5" y="667.5" width="15" height="16" fill="#fff" stroke="#111" stroke-width="1.1"/><circle cx="1878.5" cy="675.6" r="4" fill="#fff" stroke="#555" stroke-width="1.1"/><rect x="1704.5" y="687.5" width="15.5" height="16" fill="#d9d9d9" stroke="#eee"/><rect x="1722.5" y="687.5" width="12.5" height="16" fill="#d9d9d9" stroke="#eee"/><path d="M1703 705.5h44" stroke="#b4b4b4"/><rect x="1738.7" y="688.5" width="4.3" height="15" fill="#0b8050"/><g transform="translate(1712.5 695.6)"><path d="M-6 .500c2-3.5 10-3.5 12 0c-2 3-10 3-12 0z" fill="#fff" stroke="#111" stroke-width="1"/><circle cx="0" cy=".300" r="2.3" fill="#111"/><path d="M-6.5-1.5c3-3.5 10-3.5 13 0" fill="none" stroke="#111" stroke-width="1.5"/></g><path d="M1778 705.5h119" stroke="#c4c4c4"/><rect x="1780.5" y="687.5" width="15" height="16" fill="#fff" stroke="#111" stroke-width="1.1"/><circle cx="1878.5" cy="695.6" r="4" fill="#fff" stroke="#555" stroke-width="1.1"/><rect x="1704.5" y="707.5" width="15.5" height="16" fill="#d9d9d9" stroke="#eee"/><rect x="1722.5" y="707.5" width="12.5" height="16" fill="#d9d9d9" stroke="#eee"/><path d="M1703 725.5h44" stroke="#b4b4b4"/><rect x="1738.7" y="708.5" width="4.3" height="15" fill="#0b8050"/><g transform="translate(1712.5 715.6)"><path d="M-6 .500c2-3.5 10-3.5 12 0c-2 3-10 3-12 0z" fill="#fff" stroke="#111" stroke-width="1"/><circle cx="0" cy=".300" r="2.3" fill="#111"/><path d="M-6.5-1.5c3-3.5 10-3.5 13 0" fill="none" stroke="#111" stroke-width="1.5"/></g><path d="M1778 725.5h119" stroke="#c4c4c4"/><rect x="1780.5" y="707.5" width="15" height="16" fill="#fff" stroke="#111" stroke-width="1.1"/><circle cx="1878.5" cy="715.6" r="4" fill="#fff" stroke="#555" stroke-width="1.1"/><rect x="1704.5" y="727.5" width="15.5" height="16" fill="#d9d9d9" stroke="#eee"/><rect x="1722.5" y="727.5" width="12.5" height="16" fill="#d9d9d9" stroke="#eee"/><path d="M1703 745.5h44" stroke="#b4b4b4"/><rect x="1738.7" y="728.5" width="4.3" height="15" fill="#0b8050"/><g transform="translate(1712.5 735.6)"><path d="M-6 .500c2-3.5 10-3.5 12 0c-2 3-10 3-12 0z" fill="#fff" stroke="#111" stroke-width="1"/><circle cx="0" cy=".300" r="2.3" fill="#111"/><path d="M-6.5-1.5c3-3.5 10-3.5 13 0" fill="none" stroke="#111" stroke-width="1.5"/></g><path d="M1778 745.5h119" stroke="#c4c4c4"/><rect x="1780.5" y="727.5" width="15" height="16" fill="#fff" stroke="#111" stroke-width="1.1"/><text x="1800.7" y="739.3" font-family="Liberation Sans, sans-serif" font-size="10" textLength="47.25" lengthAdjust="spacingAndGlyphs" fill="#111">&lt;Hilfslinie&gt;</text><circle cx="1878.5" cy="735.6" r="4" fill="#fff" stroke="#555" stroke-width="1.1"/><path d="M1703 739.5h195" stroke="#111" stroke-width="1.2"/></svg><svg class="a" style="left:1701px;top:740px" width="200" height="17" viewBox="1701 740 200 17"><rect x="1783.5" y="742.5" width="8" height="7" fill="none" stroke="#555" stroke-dasharray="1.5 1"/><circle cx="1791" cy="749.5" r="4.5" fill="#eee" stroke="#333"/><path d="M1791 749.5v-4.5a4.5 4.5 0 0 0-4.5 4.5z" fill="#333"/><path d="M1812 746.5h6M1816 744l2.5 2.5-2.5 2.5" fill="none" stroke="#222" stroke-width="1.2"/><rect x="1820.5" y="745.5" width="7" height="7" fill="#f4f4f4" stroke="#333"/><rect x="1820.5" y="749" width="3.5" height="3.5" fill="#999"/><g transform="translate(1851 748)"><rect x="-5.5" y="-5.5" width="11" height="11" fill="#f8f8f8" stroke="#333"/><path d="M-5 5v-5h5" fill="none" stroke="#333"/><rect x="-5" y="0" width="5" height="5" fill="#aaa" stroke="#333" stroke-width=".8"/></g><g transform="translate(1882 748)"><path d="M-4-3.5h8l-.800 9h-6.4z" fill="#f2f2f2" stroke="#333" stroke-width="1"/><path d="M-5-4h10M-2-6h4" stroke="#333" stroke-width="1.3"/><path d="M-1.5-1.5v5M1.5-1.5v5" stroke="#555" stroke-width=".9"/></g></svg><svg class="a" style="left:1903px;top:745px" width="10" height="10"><path d="M8.5 1v9M6.5 3v7M4.5 5v5M2.5 7v3M0.5 9v1" stroke="#8c8c8c" stroke-width="1" stroke-dasharray="1 1"/></svg><div class="red" style="left:1776px;top:584px;width:123px;height:44px"></div><div class="sep" style="top:756px"></div><div class="a" style="left:1701px;top:760px;width:214px;height:174px;background:#d7d7d7"></div><div class="tabbar" style="top:760px"></div><div class="tab on" style="left:1701px;top:760px;width:58px"></div><div class="tab" style="left:1759px;top:760px;width:50px;border-left:1px solid #6e6e6e"></div><div class="tab" style="left:1809px;top:760px;width:67px"></div><svg class="a" style="left:1895px;top:763px" width="18" height="12"><path d="M0.5 2.5h5l-2.5 3.5z" fill="#333"/><path d="M7 1.5h9.5M7 4.5h9.5M7 7.5h9.5M7 10.5h9.5" stroke="#444" stroke-width="1.3"/></svg><div class="psb" style="top:779px;height:138px"></div><svg class="a" style="left:1901px;top:786px" width="9" height="6"><path d="M0 5.5h8l-4-5z" fill="#999"/></svg><svg class="a" style="left:1901px;top:906px" width="9" height="6"><path d="M0 0.5h8l-4 5z" fill="#999"/></svg><svg class="a" style="left:1703px;top:777px" width="210" height="141" viewBox="1703 777 210 141"><path d="M1703 778h210" stroke="#111" stroke-width="1.3"/><rect x="1703" y="779" width="195" height="23" fill="#dadada"/><rect x="1705.5" y="781.5" width="19" height="19" fill="#fff" stroke="#111" stroke-width="1.1"/><rect x="1707" y="783" width="16" height="16" fill="#d15555"/><path d="M1703 802.5h195" stroke="#111" stroke-width="1.3"/><rect x="1703" y="803" width="195" height="71" fill="#d6d6d6"/><path d="M1703 827.5h195M1703 851.5h195" stroke="#f4f4f4" stroke-width="1.2"/><path d="M1724.5 803v71" stroke="#111" stroke-width="1.2"/><rect x="1706.5" y="806" width="12" height="17" fill="#dcdcdc" stroke="#e8e8e8"/><g transform="translate(1712.5 815)"><path d="M-6 .500c2-3.5 10-3.5 12 0c-2 3-10 3-12 0z" fill="#fff" stroke="#111" stroke-width="1"/><circle cx="0" cy=".300" r="2.3" fill="#111"/><path d="M-6.5-1.5c3-3.5 10-3.5 13 0" fill="none" stroke="#111" stroke-width="1.5"/></g><rect x="1706.5" y="830" width="12" height="17" fill="#dcdcdc" stroke="#e8e8e8"/><g transform="translate(1712.5 839)"><path d="M-6 .500c2-3.5 10-3.5 12 0c-2 3-10 3-12 0z" fill="#fff" stroke="#111" stroke-width="1"/><circle cx="0" cy=".300" r="2.3" fill="#111"/><path d="M-6.5-1.5c3-3.5 10-3.5 13 0" fill="none" stroke="#111" stroke-width="1.5"/></g><rect x="1706.5" y="854" width="12" height="17" fill="#dcdcdc" stroke="#e8e8e8"/><g transform="translate(1712.5 863)"><path d="M-6 .500c2-3.5 10-3.5 12 0c-2 3-10 3-12 0z" fill="#fff" stroke="#8a8a8a" stroke-width="1"/><circle cx="0" cy=".300" r="2.3" fill="#8a8a8a"/><path d="M-6.5-1.5c3-3.5 10-3.5 13 0" fill="none" stroke="#8a8a8a" stroke-width="1.5"/></g><path d="M1728 809v12l5.5-6z" fill="#d6d6d6" stroke="#111" stroke-width="1.2"/><rect x="1783.5" y="806.5" width="17" height="17" fill="#d6d6d6" stroke="#111" stroke-width="1.2"/><path d="M1728 833v12l5.5-6z" fill="#d6d6d6" stroke="#111" stroke-width="1.2"/><rect x="1783.5" y="830.5" width="17" height="17" fill="#d6d6d6" stroke="#111" stroke-width="1.2"/><rect x="1786" y="809" width="12" height="12" fill="#fff" stroke="#111"/><path d="M1786.5 820.5l11-11" stroke="#c8102e" stroke-width="1.6"/><rect x="1786" y="833" width="12" height="12" fill="#d15555" stroke="#111"/><path d="M1703 874.5h195" stroke="#111" stroke-width="1.3"/><path d="M1703 916.5h195" stroke="#111" stroke-width="1.3"/></svg><svg class="a" style="left:1701px;top:917px" width="200" height="17" viewBox="1701 917 200 17"><rect x="1715" y="919" width="9" height="9" fill="#444"/><rect x="1718" y="922" width="3" height="3" fill="#ddd"/><rect x="1748.5" y="919.5" width="9" height="9" fill="#fafafa" stroke="#444"/><text x="1780" y="930" font-family="Liberation Serif, serif" font-style="italic" font-weight="bold" font-size="14" fill="#333">fx</text><path d="M1794 930h3v-3z" fill="#111"/><circle cx="1818.5" cy="924.5" r="4.3" fill="#eee" stroke="#333" stroke-width="1.2"/><path d="M1815.5 921.5l6 6" stroke="#333" stroke-width="1.2"/><g transform="translate(1853 925)"><rect x="-5.5" y="-5.5" width="11" height="11" fill="#f8f8f8" stroke="#ccc"/><path d="M-5 5v-5h5" fill="none" stroke="#ccc"/><rect x="-5" y="0" width="5" height="5" fill="#ccc" stroke="#ccc" stroke-width=".8"/></g><g transform="translate(1883 925)"><path d="M-4-3.5h8l-.800 9h-6.4z" fill="#f2f2f2" stroke="#333" stroke-width="1"/><path d="M-5-4h10M-2-6h4" stroke="#333" stroke-width="1.3"/><path d="M-1.5-1.5v5M1.5-1.5v5" stroke="#555" stroke-width=".9"/></g></svg><svg class="a" style="left:1903px;top:922px" width="10" height="10"><path d="M8.5 1v9M6.5 3v7M4.5 5v5M2.5 7v3M0.5 9v1" stroke="#8c8c8c" stroke-width="1" stroke-dasharray="1 1"/></svg><div class="sep" style="top:933px"></div><div class="a" style="left:1701px;top:937px;width:214px;height:98px;background:#d6d6d6"></div><div class="tabbar" style="top:937px"></div><div class="a" style="left:1765px;top:937px;width:62px;height:17px;background:linear-gradient(#ececec,#d8d8d8)"></div><svg class="a" style="left:1895px;top:940px" width="18" height="12"><path d="M0.5 2.5h5l-2.5 3.5z" fill="#333"/><path d="M7 1.5h9.5M7 4.5h9.5M7 7.5h9.5M7 10.5h9.5" stroke="#444" stroke-width="1.3"/></svg><svg class="a" style="left:1701px;top:968px" width="214" height="67" viewBox="1701 968 214 67"><defs><linearGradient id="pg" x1="0" y1="0" x2="1" y2="1"><stop offset="0" stop-color="#fafafa"/><stop offset="1" stop-color="#bdbdbd"/></linearGradient><linearGradient id="pgd" x1="0" y1="0" x2="1" y2="1"><stop offset="0" stop-color="#999"/><stop offset="1" stop-color="#111"/></linearGradient></defs><path d="M1713.5 975.5h8v4h4v8h-8v-4h-4z" fill="url(#pg)" stroke="#777"/><path d="M1721.5 979.5h-4v4" fill="none" stroke="#aaa"/><rect x="1741.5" y="972.5" width="21" height="17" fill="#dfe3f0" stroke="#a8b0c8"/><rect x="1750.5" y="979.5" width="9" height="8" fill="#d8def0" stroke="#b8c0dc"/><path d="M1746.5 984v-7.5h7.5" fill="none" stroke="#2a2ad0" stroke-width="2.2"/><rect x="1778.5" y="975.5" width="8" height="8" fill="none" stroke="#777"/><rect x="1782.5" y="979.5" width="8" height="8" fill="none" stroke="#999"/><rect x="1782" y="979" width="5" height="5" fill="url(#pgd)" stroke="#111"/><rect x="1810.5" y="975.5" width="8" height="8" fill="url(#pgd)" stroke="#555"/><rect x="1814.5" y="979.5" width="8" height="8" fill="url(#pgd)" stroke="#222"/><rect x="1815" y="980" width="3.5" height="3.5" fill="#ddd"/><rect x="1836.5" y="973.5" width="68" height="17" rx="2.5" fill="#e4e4e4" stroke="#f4f4f4" stroke-width="1.3"/><circle cx="1719" cy="1020" r="6" fill="#e4e4e4" stroke="#666"/><circle cx="1751" cy="1020" r="6" fill="#e4e4e4" stroke="#666"/><circle cx="1783" cy="1020" r="6" fill="#e4e4e4" stroke="#666"/><circle cx="1815" cy="1020" r="6" fill="#e4e4e4" stroke="#666"/><circle cx="1847" cy="1020" r="6" fill="#e4e4e4" stroke="#666"/></svg><div class="red" style="left:1761.5px;top:933px;width:69px;height:22.5px"></div><div class="red" style="left:1736px;top:968.5px;width:32px;height:26px"></div><div class="a" style="left:1138px;top:1004px;width:779px;height:18.5px;background:#ffffe1;border:1px solid #4a4a4a"></div><svg class="a" style="left:0;top:0;pointer-events:none" width="1920" height="1040" font-family="Liberation Sans, sans-serif"><text x="52.3" y="23.7" font-size="11.5" fill="#222" textLength="26.3" lengthAdjust="spacingAndGlyphs">Datei</text><text x="97.3" y="23.7" font-size="11.5" fill="#222" textLength="55.3" lengthAdjust="spacingAndGlyphs">Bearbeiten</text><text x="172.3" y="23.7" font-size="11.5" fill="#222" textLength="34.7" lengthAdjust="spacingAndGlyphs">Objekt</text><text x="225.3" y="23.7" font-size="11.5" fill="#222" textLength="33.7" lengthAdjust="spacingAndGlyphs">Schrift</text><text x="276" y="23.7" font-size="11.5" fill="#222" textLength="44.7" lengthAdjust="spacingAndGlyphs">Auswahl</text><text x="338.3" y="23.7" font-size="11.5" fill="#222" textLength="29.7" lengthAdjust="spacingAndGlyphs">Effekt</text><text x="385.7" y="23.7" font-size="11.5" fill="#222" textLength="39.3" lengthAdjust="spacingAndGlyphs">Ansicht</text><text x="442.7" y="23.7" font-size="11.5" fill="#222" textLength="37.3" lengthAdjust="spacingAndGlyphs">Fenster</text><text x="498.7" y="23.7" font-size="11.5" fill="#222" textLength="24" lengthAdjust="spacingAndGlyphs">Hilfe</text><text x="1441.7" y="22.7" font-size="12" font-weight="bold" fill="#3c3c3c" textLength="113.3" lengthAdjust="spacingAndGlyphs">Mein Arbeitsbereich</text><text x="1756.3" y="22.7" font-size="11.5" fill="#333" textLength="36" lengthAdjust="spacingAndGlyphs">CS Live</text><text x="19.4" y="49.8" font-size="10" fill="#111" textLength="19.4" lengthAdjust="spacingAndGlyphs">Pfad</text><text x="200" y="56" font-size="10.5" fill="#1414d8" textLength="34" lengthAdjust="spacingAndGlyphs">Kontur:</text><path d="M200 59H234" stroke="#1414d8" stroke-width="1" stroke-dasharray="1 1" fill="none"/><text x="482.5" y="56" font-size="10.5" fill="#111" textLength="31.7" lengthAdjust="spacingAndGlyphs">Einfach</text><text x="540.3" y="56" font-size="10.5" fill="#111" textLength="16" lengthAdjust="spacingAndGlyphs">Stil:</text><text x="609.2" y="56" font-size="10.5" fill="#1414d8" textLength="39.1" lengthAdjust="spacingAndGlyphs">Deckkr.:</text><path d="M609 59H648" stroke="#1414d8" stroke-width="1" stroke-dasharray="1 1" fill="none"/><text x="657.5" y="56" font-size="10.5" fill="#111" textLength="14.2" lengthAdjust="spacingAndGlyphs">100</text><text x="713.3" y="56" font-size="10.5" fill="#111" textLength="9.2" lengthAdjust="spacingAndGlyphs">%</text><text x="1134" y="56" font-size="10.5" fill="#1414d8" textLength="8" lengthAdjust="spacingAndGlyphs">x:</text><path d="M1134 59H1142" stroke="#1414d8" stroke-width="1" stroke-dasharray="1 1" fill="none"/><text x="1166" y="56" font-size="10.5" fill="#111" textLength="48" lengthAdjust="spacingAndGlyphs">69,217 mm</text><text x="1227.7" y="56" font-size="10.5" fill="#1414d8" textLength="9" lengthAdjust="spacingAndGlyphs">y:</text><path d="M1227.7 59H1236.7" stroke="#1414d8" stroke-width="1" stroke-dasharray="1 1" fill="none"/><text x="1261" y="56" font-size="10.5" fill="#111" textLength="48" lengthAdjust="spacingAndGlyphs">44,757 mm</text><text x="1324.3" y="56" font-size="10.5" fill="#1414d8" textLength="9" lengthAdjust="spacingAndGlyphs">B:</text><path d="M1324.3 59H1333.3" stroke="#1414d8" stroke-width="1" stroke-dasharray="1 1" fill="none"/><text x="1360" y="56" font-size="10.5" fill="#111" textLength="47" lengthAdjust="spacingAndGlyphs">18,825 mm</text><text x="1436" y="56" font-size="10.5" fill="#1414d8" textLength="10" lengthAdjust="spacingAndGlyphs">H:</text><path d="M1436 59H1446" stroke="#1414d8" stroke-width="1" stroke-dasharray="1 1" fill="none"/><text x="1469" y="56" font-size="10.5" fill="#111" textLength="47" lengthAdjust="spacingAndGlyphs">28,104 mm</text><text x="74.2" y="82.4" font-size="10.5" font-weight="bold" fill="#333" textLength="292" lengthAdjust="spacingAndGlyphs">Tutorial_Flyer_Laufszene.ai* bei 150 % (CMYK/Vorschau)</text><text x="71" y="1031.5" font-size="10" fill="#111" textLength="24.5" lengthAdjust="spacingAndGlyphs">150%</text><text x="164.5" y="1031.5" font-size="10" fill="#111">1</text><text x="295" y="1031" font-size="10" fill="#222" textLength="63" lengthAdjust="spacingAndGlyphs">Direktauswahl</text><text x="1708.5" y="93" font-size="10.5" font-weight="bold" fill="#383838" textLength="25" lengthAdjust="spacingAndGlyphs">Farbe</text><text x="1748" y="93" font-size="10.5" font-weight="bold" fill="#222" textLength="46.9" lengthAdjust="spacingAndGlyphs">Farbfelder</text><text x="1809.4" y="93" font-size="10.5" font-weight="bold" fill="#383838" textLength="40.9" lengthAdjust="spacingAndGlyphs">Farbhilfe</text><text x="1708.5" y="326" font-size="10.5" font-weight="bold" fill="#222" textLength="26.5" lengthAdjust="spacingAndGlyphs">Pinsel</text><text x="1749.4" y="326" font-size="10.5" font-weight="bold" fill="#383838" textLength="40.4" lengthAdjust="spacingAndGlyphs">Symbole</text><text x="1805.4" y="326" font-size="10.5" font-weight="bold" fill="#383838" textLength="48.4" lengthAdjust="spacingAndGlyphs">Grafikstile</text><text x="1708.5" y="559" font-size="10.5" font-weight="bold" fill="#222" textLength="32.4" lengthAdjust="spacingAndGlyphs">Ebenen</text><text x="1754.75" y="559" font-size="10.5" font-weight="bold" fill="#383838" textLength="35.9" lengthAdjust="spacingAndGlyphs">Zeichen</text><text x="1806.25" y="559" font-size="10.5" font-weight="bold" fill="#383838" textLength="30.6" lengthAdjust="spacingAndGlyphs">Absatz</text><text x="1708.5" y="772" font-size="10.5" font-weight="bold" fill="#222" textLength="42.1" lengthAdjust="spacingAndGlyphs">Aussehen</text><text x="1766.25" y="772" font-size="10.5" font-weight="bold" fill="#383838" textLength="33.75" lengthAdjust="spacingAndGlyphs">Verlauf</text><text x="1815.4" y="772" font-size="10.5" font-weight="bold" fill="#383838" textLength="55.5" lengthAdjust="spacingAndGlyphs">Transparenz</text><text x="1863.1" y="384.5" font-size="10" fill="#111" textLength="32.5" lengthAdjust="spacingAndGlyphs">Einfach</text><text x="1785.7" y="579.3" font-size="10.5" font-weight="bold" fill="#fff" textLength="62" lengthAdjust="spacingAndGlyphs">Meine Ebene</text><text x="1800.7" y="599.3" font-size="10" fill="#111" textLength="32.25" lengthAdjust="spacingAndGlyphs">&lt;Pfad&gt;</text><text x="1800.7" y="619.3" font-size="10" fill="#111" textLength="32.25" lengthAdjust="spacingAndGlyphs">&lt;Pfad&gt;</text><text x="1800.7" y="639.3" font-size="10" fill="#111" textLength="32.25" lengthAdjust="spacingAndGlyphs">&lt;Pfad&gt;</text><text x="1800.7" y="659.3" font-size="10" fill="#111" textLength="47.25" lengthAdjust="spacingAndGlyphs">&lt;Hilfslinie&gt;</text><text x="1800.7" y="679.3" font-size="10" fill="#111" textLength="47.25" lengthAdjust="spacingAndGlyphs">&lt;Hilfslinie&gt;</text><text x="1800.7" y="699.3" font-size="10" fill="#111" textLength="47.25" lengthAdjust="spacingAndGlyphs">&lt;Hilfslinie&gt;</text><text x="1800.7" y="719.3" font-size="10" fill="#111" textLength="47.25" lengthAdjust="spacingAndGlyphs">&lt;Hilfslinie&gt;</text><text x="1712.5" y="752" font-size="10" fill="#111" textLength="40.75" lengthAdjust="spacingAndGlyphs">2 Ebenen</text><text x="1737.5" y="795" font-size="10.5" font-weight="bold" fill="#111" textLength="22" lengthAdjust="spacingAndGlyphs">Pfad</text><text x="1738.1" y="818.5" font-size="10.5" fill="#1414d8" textLength="34.6" lengthAdjust="spacingAndGlyphs">Kontur:</text><path d="M1738 821.5H1773" stroke="#1414d8" stroke-width="1" stroke-dasharray="1 1" fill="none"/><text x="1737.5" y="842.5" font-size="10.5" fill="#111" textLength="31.9" lengthAdjust="spacingAndGlyphs">Fläche:</text><text x="1738.1" y="866.5" font-size="10.5" fill="#1414d8" textLength="47.5" lengthAdjust="spacingAndGlyphs">Deckkraft:</text><path d="M1738 869.5H1786" stroke="#1414d8" stroke-width="1" stroke-dasharray="1 1" fill="none"/><text x="1791.9" y="866.5" font-size="10.5" fill="#111" textLength="40.9" lengthAdjust="spacingAndGlyphs">Standard</text><text x="1708.3" y="949" font-size="10.5" font-weight="bold" fill="#383838" textLength="49.4" lengthAdjust="spacingAndGlyphs">Ausrichten</text><text x="1772.2" y="949" font-size="10.5" font-weight="bold" fill="#222" textLength="48.9" lengthAdjust="spacingAndGlyphs">Pathfinder</text><text x="1707.6" y="966.5" font-size="10.5" fill="#111" textLength="48.5" lengthAdjust="spacingAndGlyphs">Formmodi:</text><text x="1707.6" y="1004.5" font-size="10.5" fill="#111" textLength="48.5" lengthAdjust="spacingAndGlyphs">Pathfinder:</text><text x="1844.5" y="986" font-size="10.5" fill="#9a9a9a" textLength="52" lengthAdjust="spacingAndGlyphs">Umwandeln</text><text x="1141" y="1017.5" font-size="12.3" fill="#111" textLength="771.5" lengthAdjust="spacingAndGlyphs">Vorderes Objekt abziehen (zum Erstellen einer zusammengesetzten Form und zum Subtrahieren vom Formbereich bei gedrückter Alt-Taste klicken)</text></svg></body></html>
